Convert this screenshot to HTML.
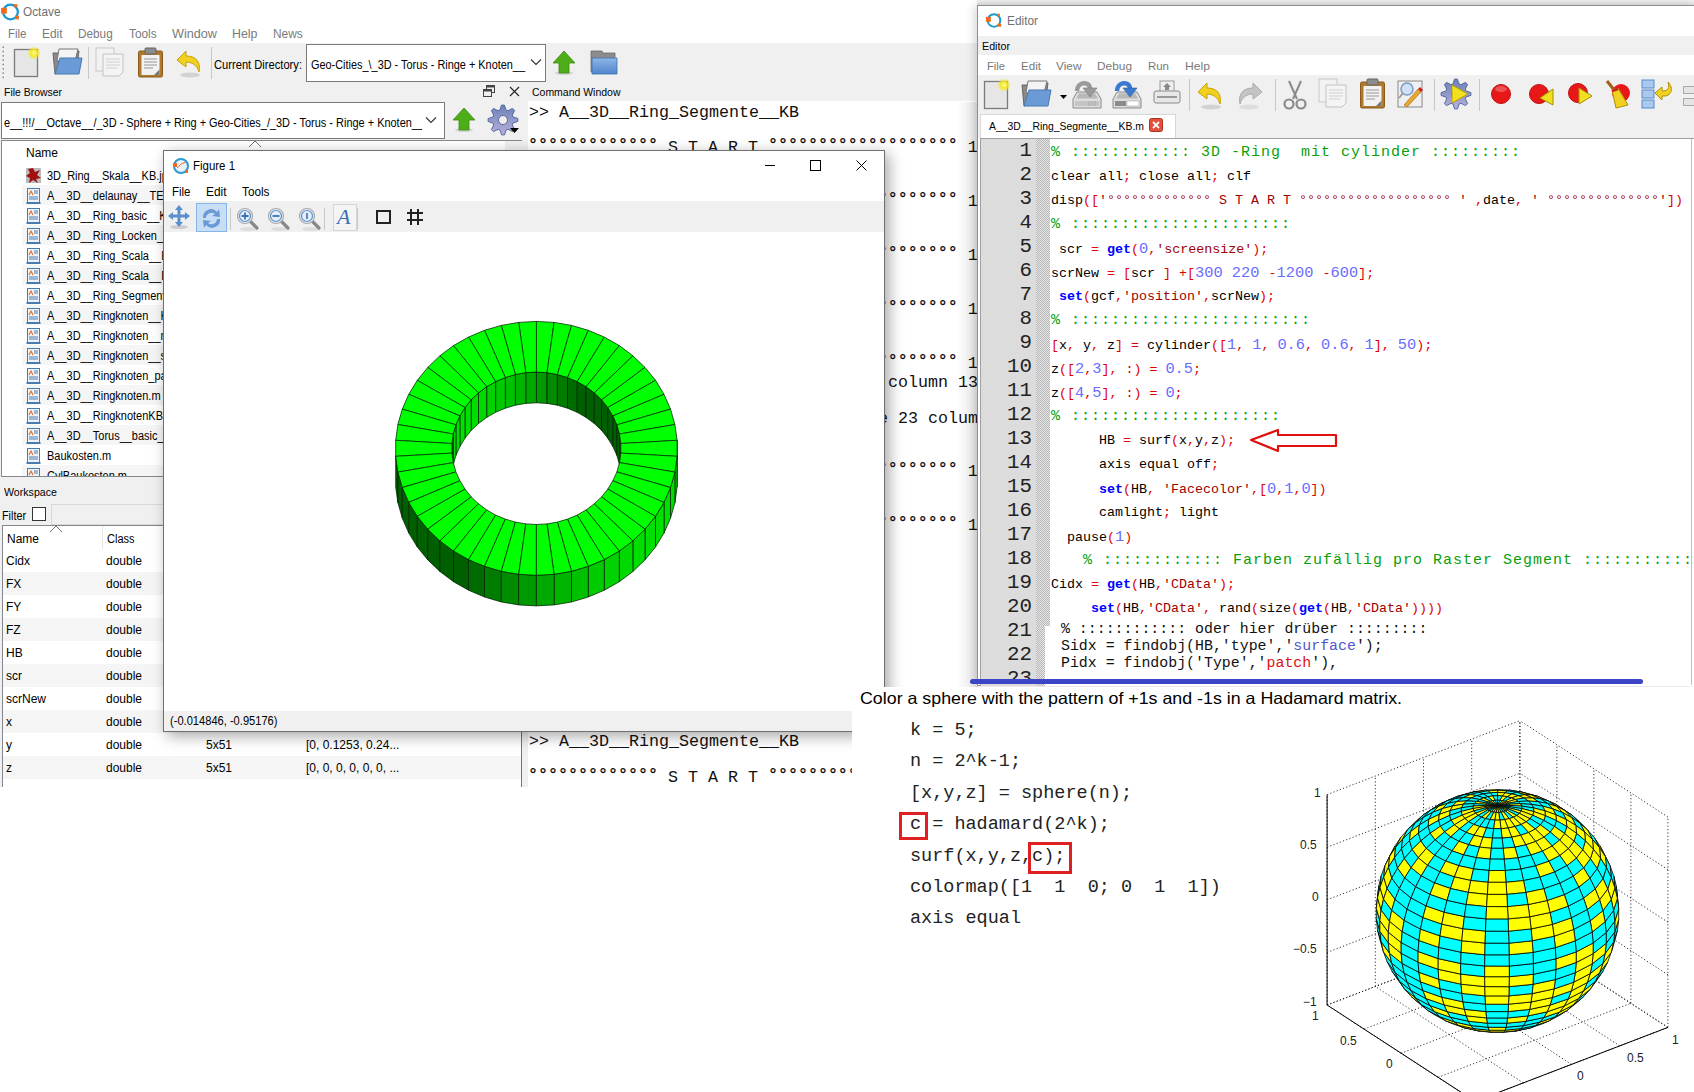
<!DOCTYPE html><html><head><meta charset="utf-8"><style>
*{margin:0;padding:0;box-sizing:border-box}
html,body{width:1694px;height:1092px;overflow:hidden;background:#fff;position:relative;font-family:"Liberation Sans",sans-serif;font-size:12px;color:#000}
.a{position:absolute}
.t{position:absolute;white-space:pre;line-height:1}
.m{font-family:"Liberation Mono",monospace}
.c{position:absolute;white-space:pre;line-height:1;font-family:"Liberation Mono",monospace;font-size:13.33px}
.cm{color:#0aa00a;font-size:16.67px}
.k{color:#0000ff;font-weight:bold}
.s{color:#a00000}
.o{color:#e00000}
.n{color:#6b6bff;font-size:15.33px}
</style></head><body><div class="a" style="left:0px;top:0px;width:978px;height:43px;background:#fff"></div><div class="a" style="left:0px;top:43px;width:978px;height:744px;background:#f0f0f0"></div><svg class="a" style="left:0px;top:1px" width="21" height="21" viewBox="0 0 20 20"><circle cx="10" cy="10.5" r="7" fill="none" stroke="#1a9ad0" stroke-width="2.2"/><rect x="1" y="6.5" width="5.5" height="5.5" fill="#f26b1d"/><rect x="13.5" y="3" width="3" height="3" fill="#f26b1d"/><rect x="14.5" y="14" width="3.5" height="3.5" fill="#f26b1d"/></svg><div id="w0" class="t" style="left:23px;top:6px;font-size:12.5px;color:#707070;transform-origin:0 0;transform:scaleX(0.9467)">Octave</div><div id="w1" class="t" style="left:8px;top:28px;color:#7a7a7a;font-size:12px;transform-origin:0 0;transform:scaleX(0.9512)">File</div><div id="w2" class="t" style="left:42px;top:28px;color:#7a7a7a;font-size:12px;transform-origin:0 0;transform:scaleX(0.9909)">Edit</div><div id="w3" class="t" style="left:78px;top:28px;color:#7a7a7a;font-size:12px;transform-origin:0 0;transform:scaleX(0.9809)">Debug</div><div id="w4" class="t" style="left:129px;top:28px;color:#7a7a7a;font-size:12px;transform-origin:0 0;transform:scaleX(0.9852)">Tools</div><div id="w5" class="t" style="left:172px;top:28px;color:#7a7a7a;font-size:12px;transform-origin:0 0;transform:scaleX(1.0542)">Window</div><div id="w6" class="t" style="left:232px;top:28px;color:#7a7a7a;font-size:12px;transform-origin:0 0;transform:scaleX(1.0329)">Help</div><div id="w7" class="t" style="left:273px;top:28px;color:#7a7a7a;font-size:12px;transform-origin:0 0;transform:scaleX(0.9928)">News</div><svg class="a" style="left:1px;top:45px" width="5" height="36" viewBox="0 0 5 36"><rect x="1.5" y="1.5" width="1.5" height="1.5" fill="#888"/><rect x="1.5" y="5.8" width="1.5" height="1.5" fill="#888"/><rect x="1.5" y="10.1" width="1.5" height="1.5" fill="#888"/><rect x="1.5" y="14.4" width="1.5" height="1.5" fill="#888"/><rect x="1.5" y="18.7" width="1.5" height="1.5" fill="#888"/><rect x="1.5" y="23.0" width="1.5" height="1.5" fill="#888"/><rect x="1.5" y="27.3" width="1.5" height="1.5" fill="#888"/><rect x="1.5" y="31.6" width="1.5" height="1.5" fill="#888"/></svg><svg class="a" style="left:13px;top:47px" width="30" height="32" viewBox="0 0 30 32"><defs><radialGradient id="glow"><stop offset="0" stop-color="#ffffa0"/><stop offset=".45" stop-color="#f4e826"/><stop offset="1" stop-color="#f4e826" stop-opacity="0"/></radialGradient></defs><rect x="1.5" y="2.5" width="23" height="27" fill="#e6e6e6" stroke="#7b7b7b" stroke-width="1.3"/><circle cx="21" cy="6" r="7" fill="url(#glow)"/></svg><svg class="a" style="left:51px;top:47px" width="32" height="30" viewBox="0 0 32 30"><path d="M2 6 L10 6 L10 4 L28 4 L26 20 L4 27 Z" fill="#8a8a8a" stroke="#666" stroke-width="1"/><path d="M8 2 L27 2 L24 14 L6 14 Z" fill="#f4f4f4" stroke="#777" stroke-width="1"/><path d="M9 11 L31 11 L28 27 L4 27 Z" fill="#6a9bd6" stroke="#4a78b0" stroke-width="1"/></svg><div class="a" style="left:88px;top:47px;width:1px;height:32px;background:#c8c8c8"></div><svg class="a" style="left:95px;top:47px" width="30" height="31" viewBox="0 0 30 31"><g opacity="0.45"><rect x="1" y="1" width="18" height="23" fill="#f6f6f6" stroke="#9a9a9a"/><path d="M8 7 L28 7 L28 25 L24 29 L8 29 Z" fill="#fafafa" stroke="#8a8a8a"/><path d="M11 12 H25 M11 15 H25 M11 18 H25 M11 21 H22" stroke="#aaa"/></g></svg><svg class="a" style="left:137px;top:47px" width="27" height="31" viewBox="0 0 27 31"><rect x="1.5" y="4" width="24" height="26" rx="1.5" fill="#b07a2e" stroke="#8a5a1a"/><rect x="4.5" y="8" width="18" height="20" fill="#f2f2f2"/><rect x="8" y="1" width="11" height="6" rx="1" fill="#8c8c8c" stroke="#666"/><path d="M7 12 H20 M7 15 H20 M7 18 H20 M7 21 H16" stroke="#999"/><path d="M17 28 L22.5 22.5 L22.5 28 Z" fill="#777"/></svg><svg class="a" style="left:175px;top:48px" width="28" height="30" viewBox="0 0 28 30"><ellipse cx="15" cy="27" rx="10" ry="2.5" fill="#000" opacity=".12"/><path d="M2 12 L11 3 L11 8 C21 8 26 14 24 24 C22 17 17 14 11 14 L11 19 Z" fill="#f0d020" stroke="#c8a000" stroke-width="1"/></svg><div class="a" style="left:211px;top:47px;width:1px;height:32px;background:#c8c8c8"></div><div id="w8" class="t" style="left:214px;top:59px;font-size:12px;transform-origin:0 0;transform:scaleX(0.9294)">Current Directory:</div><div class="a" style="left:306px;top:44px;width:240px;height:38px;background:#fff;border:1px solid #7a7a7a"></div><div id="w9" class="t" style="left:311px;top:59px;font-size:12px;transform-origin:0 0;transform:scaleX(0.9084)">Geo-Cities_\_3D - Torus - Ringe + Knoten__</div><svg class="a" style="left:530px;top:58px" width="12" height="8" viewBox="0 0 12 8"><path d="M1 1.5 L6 6.5 L11 1.5" fill="none" stroke="#333" stroke-width="1.1"/></svg><svg class="a" style="left:552px;top:50px" width="24" height="26" viewBox="0 0 24 26"><ellipse cx="12" cy="23" rx="9" ry="2" fill="#000" opacity=".12"/><path d="M12 1 L23 13 L17 13 L17 23 L7 23 L7 13 L1 13 Z" fill="#4eae1a" stroke="#3a8a10" stroke-width=".8"/></svg><svg class="a" style="left:590px;top:50px" width="29" height="27" viewBox="0 0 29 27"><defs><linearGradient id="bfg" x1="0" y1="0" x2="0" y2="1"><stop offset="0" stop-color="#8fb6e6"/><stop offset="1" stop-color="#4f86cc"/></linearGradient></defs><path d="M1 1 L12 1 L13 3 L25 3 L25 22 L1 22 Z" fill="#8c8c8c" stroke="#6a6a6a" stroke-width=".8"/><path d="M2 8 L27 8 L27 24 L2 24 Z" fill="url(#bfg)" stroke="#3e70b0" stroke-width=".8"/></svg><div id="w10" class="t" style="left:4px;top:87px;font-size:11px;transform-origin:0 0;transform:scaleX(0.9489)">File Browser</div><svg class="a" style="left:483px;top:85px" width="13" height="13" viewBox="0 0 13 13"><rect x="3.5" y=".5" width="8" height="7" fill="none" stroke="#444"/><rect x="3.5" y=".5" width="8" height="2" fill="#444"/><rect x=".5" y="4.5" width="8" height="7" fill="#f0f0f0" stroke="#444"/><rect x=".5" y="4.5" width="8" height="2" fill="#444"/></svg><svg class="a" style="left:509px;top:86px" width="11" height="11" viewBox="0 0 11 11"><path d="M1 1 L10 10 M10 1 L1 10" stroke="#222" stroke-width="1.1"/></svg><div id="w11" class="t" style="left:532px;top:87px;font-size:11px;transform-origin:0 0;transform:scaleX(0.9524)">Command Window</div><div class="a" style="left:1px;top:102px;width:444px;height:37px;background:#fff;border:1px solid #7a7a7a"></div><div class="a" style="left:2px;top:103px;width:420px;height:35px;overflow:hidden"><div id="w12" class="t" style="left:2px;top:14px;font-size:12px;transform-origin:0 0;transform:scaleX(0.9123)">e__!!!/__Octave__/_3D - Sphere + Ring + Geo-Cities_/_3D - Torus - Ringe + Knoten__</div></div><svg class="a" style="left:425px;top:116px" width="12" height="8" viewBox="0 0 12 8"><path d="M1 1.5 L6 6.5 L11 1.5" fill="none" stroke="#333" stroke-width="1.1"/></svg><svg class="a" style="left:452px;top:107px" width="24" height="26" viewBox="0 0 24 26"><ellipse cx="12" cy="23" rx="9" ry="2" fill="#000" opacity=".12"/><path d="M12 1 L23 13 L17 13 L17 23 L7 23 L7 13 L1 13 Z" fill="#4eae1a" stroke="#3a8a10" stroke-width=".8"/></svg><svg class="a" style="left:487px;top:104px" width="32" height="32" viewBox="0 0 32 32"><defs><linearGradient id="gg487" x1="0" y1="0" x2="0" y2="1"><stop offset="0" stop-color="#6a80b8"/><stop offset="1" stop-color="#b8b0dc"/></linearGradient></defs><path d="M14.5 1.1 L17.4 1.1 L19.0 5.9 L20.9 6.7 L25.5 4.4 L27.6 6.5 L25.3 11.0 L26.0 12.9 L30.9 14.5 L30.9 17.4 L26.1 19.0 L25.3 20.9 L27.6 25.5 L25.5 27.6 L21.0 25.3 L19.1 26.0 L17.5 30.9 L14.6 30.9 L13.0 26.1 L11.1 25.3 L6.5 27.6 L4.4 25.5 L6.7 21.0 L6.0 19.1 L1.1 17.5 L1.1 14.6 L5.9 13.0 L6.7 11.1 L4.4 6.5 L6.5 4.4 L11.0 6.7 L12.9 6.0Z" fill="url(#gg487)" stroke="#5a6aa0" stroke-width="1"/><circle cx="16" cy="16" r="4.5" fill="#f0f0f0" stroke="#5a6aa0"/></svg><svg class="a" style="left:510px;top:128px" width="10" height="6" viewBox="0 0 10 6"><path d="M0 0 L9 0 L4.5 5 Z" fill="#000"/></svg><div class="a" style="left:1px;top:140px;width:522px;height:337px;background:#fff;border:1px solid #828790"></div><div class="a" style="left:505px;top:141px;width:17px;height:335px;background:#f0f0f0"></div><svg class="a" style="left:248px;top:140px" width="14" height="8" viewBox="0 0 14 8"><path d="M1 7 L7 1 L13 7" fill="none" stroke="#777" stroke-width="1"/></svg><div id="w13" class="t" style="left:26px;top:147px;font-size:12px;transform-origin:0 0;transform:scaleX(0.9995)">Name</div><div class="a" style="left:2px;top:141px;width:503px;height:335px;overflow:hidden"><svg class="a" style="left:23px;top:26px" width="17" height="17" viewBox="0 0 17 17"><rect x="1" y="1" width="15" height="15" fill="#bbb"/><path d="M8 1 L10 5 L15 3 L12 8 L16 11 L11 12 L13 16 L8 13 L4 16 L5 11 L1 9 L5 6 L3 2 Z" fill="#a01010"/></svg><div class="t" style="left:45px;top:29px;font-size:12px;transform:scaleX(.915);transform-origin:0 0">3D_Ring__Skala__KB.jpg</div><div class="a" style="left:20px;top:44px;width:483px;height:20px;background:#f5f5f5"></div><svg class="a" style="left:24px;top:46px" width="16" height="18" viewBox="0 0 16 18"><rect x="1.5" y="1.5" width="12" height="14" fill="#eef3fa" stroke="#4a7ab0"/><path d="M3 8 L5 4 L7 8" stroke="#e8702a" fill="none" stroke-width="1.2"/><path d="M8 4 H12 M8 6 H12 M3 10 H12 M3 12 H12" stroke="#4a7ab0"/><rect x="0.5" y="15" width="14" height="2" fill="#4a7ab0"/></svg><div class="t" style="left:45px;top:49px;font-size:12px;transform:scaleX(.915);transform-origin:0 0">A__3D__delaunay__TEST.m</div><svg class="a" style="left:24px;top:66px" width="16" height="18" viewBox="0 0 16 18"><rect x="1.5" y="1.5" width="12" height="14" fill="#eef3fa" stroke="#4a7ab0"/><path d="M3 8 L5 4 L7 8" stroke="#e8702a" fill="none" stroke-width="1.2"/><path d="M8 4 H12 M8 6 H12 M3 10 H12 M3 12 H12" stroke="#4a7ab0"/><rect x="0.5" y="15" width="14" height="2" fill="#4a7ab0"/></svg><div class="t" style="left:45px;top:69px;font-size:12px;transform:scaleX(.915);transform-origin:0 0">A__3D__Ring_basic__KB.m</div><div class="a" style="left:20px;top:84px;width:483px;height:20px;background:#f5f5f5"></div><svg class="a" style="left:24px;top:86px" width="16" height="18" viewBox="0 0 16 18"><rect x="1.5" y="1.5" width="12" height="14" fill="#eef3fa" stroke="#4a7ab0"/><path d="M3 8 L5 4 L7 8" stroke="#e8702a" fill="none" stroke-width="1.2"/><path d="M8 4 H12 M8 6 H12 M3 10 H12 M3 12 H12" stroke="#4a7ab0"/><rect x="0.5" y="15" width="14" height="2" fill="#4a7ab0"/></svg><div class="t" style="left:45px;top:89px;font-size:12px;transform:scaleX(.915);transform-origin:0 0">A__3D__Ring_Locken_V.m</div><svg class="a" style="left:24px;top:106px" width="16" height="18" viewBox="0 0 16 18"><rect x="1.5" y="1.5" width="12" height="14" fill="#eef3fa" stroke="#4a7ab0"/><path d="M3 8 L5 4 L7 8" stroke="#e8702a" fill="none" stroke-width="1.2"/><path d="M8 4 H12 M8 6 H12 M3 10 H12 M3 12 H12" stroke="#4a7ab0"/><rect x="0.5" y="15" width="14" height="2" fill="#4a7ab0"/></svg><div class="t" style="left:45px;top:109px;font-size:12px;transform:scaleX(.915);transform-origin:0 0">A__3D__Ring_Scala__BB.m</div><div class="a" style="left:20px;top:124px;width:483px;height:20px;background:#f5f5f5"></div><svg class="a" style="left:24px;top:126px" width="16" height="18" viewBox="0 0 16 18"><rect x="1.5" y="1.5" width="12" height="14" fill="#eef3fa" stroke="#4a7ab0"/><path d="M3 8 L5 4 L7 8" stroke="#e8702a" fill="none" stroke-width="1.2"/><path d="M8 4 H12 M8 6 H12 M3 10 H12 M3 12 H12" stroke="#4a7ab0"/><rect x="0.5" y="15" width="14" height="2" fill="#4a7ab0"/></svg><div class="t" style="left:45px;top:129px;font-size:12px;transform:scaleX(.915);transform-origin:0 0">A__3D__Ring_Scala__BB2.m</div><svg class="a" style="left:24px;top:146px" width="16" height="18" viewBox="0 0 16 18"><rect x="1.5" y="1.5" width="12" height="14" fill="#eef3fa" stroke="#4a7ab0"/><path d="M3 8 L5 4 L7 8" stroke="#e8702a" fill="none" stroke-width="1.2"/><path d="M8 4 H12 M8 6 H12 M3 10 H12 M3 12 H12" stroke="#4a7ab0"/><rect x="0.5" y="15" width="14" height="2" fill="#4a7ab0"/></svg><div class="t" style="left:45px;top:149px;font-size:12px;transform:scaleX(.915);transform-origin:0 0">A__3D__Ring_Segmente__KB.m</div><div class="a" style="left:20px;top:164px;width:483px;height:20px;background:#f5f5f5"></div><svg class="a" style="left:24px;top:166px" width="16" height="18" viewBox="0 0 16 18"><rect x="1.5" y="1.5" width="12" height="14" fill="#eef3fa" stroke="#4a7ab0"/><path d="M3 8 L5 4 L7 8" stroke="#e8702a" fill="none" stroke-width="1.2"/><path d="M8 4 H12 M8 6 H12 M3 10 H12 M3 12 H12" stroke="#4a7ab0"/><rect x="0.5" y="15" width="14" height="2" fill="#4a7ab0"/></svg><div class="t" style="left:45px;top:169px;font-size:12px;transform:scaleX(.915);transform-origin:0 0">A__3D__Ringknoten__KB.m</div><svg class="a" style="left:24px;top:186px" width="16" height="18" viewBox="0 0 16 18"><rect x="1.5" y="1.5" width="12" height="14" fill="#eef3fa" stroke="#4a7ab0"/><path d="M3 8 L5 4 L7 8" stroke="#e8702a" fill="none" stroke-width="1.2"/><path d="M8 4 H12 M8 6 H12 M3 10 H12 M3 12 H12" stroke="#4a7ab0"/><rect x="0.5" y="15" width="14" height="2" fill="#4a7ab0"/></svg><div class="t" style="left:45px;top:189px;font-size:12px;transform:scaleX(.915);transform-origin:0 0">A__3D__Ringknoten__m.m</div><div class="a" style="left:20px;top:204px;width:483px;height:20px;background:#f5f5f5"></div><svg class="a" style="left:24px;top:206px" width="16" height="18" viewBox="0 0 16 18"><rect x="1.5" y="1.5" width="12" height="14" fill="#eef3fa" stroke="#4a7ab0"/><path d="M3 8 L5 4 L7 8" stroke="#e8702a" fill="none" stroke-width="1.2"/><path d="M8 4 H12 M8 6 H12 M3 10 H12 M3 12 H12" stroke="#4a7ab0"/><rect x="0.5" y="15" width="14" height="2" fill="#4a7ab0"/></svg><div class="t" style="left:45px;top:209px;font-size:12px;transform:scaleX(.915);transform-origin:0 0">A__3D__Ringknoten__s.m</div><svg class="a" style="left:24px;top:226px" width="16" height="18" viewBox="0 0 16 18"><rect x="1.5" y="1.5" width="12" height="14" fill="#eef3fa" stroke="#4a7ab0"/><path d="M3 8 L5 4 L7 8" stroke="#e8702a" fill="none" stroke-width="1.2"/><path d="M8 4 H12 M8 6 H12 M3 10 H12 M3 12 H12" stroke="#4a7ab0"/><rect x="0.5" y="15" width="14" height="2" fill="#4a7ab0"/></svg><div class="t" style="left:45px;top:229px;font-size:12px;transform:scaleX(.915);transform-origin:0 0">A__3D__Ringknoten_pa.m</div><div class="a" style="left:20px;top:244px;width:483px;height:20px;background:#f5f5f5"></div><svg class="a" style="left:24px;top:246px" width="16" height="18" viewBox="0 0 16 18"><rect x="1.5" y="1.5" width="12" height="14" fill="#eef3fa" stroke="#4a7ab0"/><path d="M3 8 L5 4 L7 8" stroke="#e8702a" fill="none" stroke-width="1.2"/><path d="M8 4 H12 M8 6 H12 M3 10 H12 M3 12 H12" stroke="#4a7ab0"/><rect x="0.5" y="15" width="14" height="2" fill="#4a7ab0"/></svg><div class="t" style="left:45px;top:249px;font-size:12px;transform:scaleX(.915);transform-origin:0 0">A__3D__Ringknoten.m</div><svg class="a" style="left:24px;top:266px" width="16" height="18" viewBox="0 0 16 18"><rect x="1.5" y="1.5" width="12" height="14" fill="#eef3fa" stroke="#4a7ab0"/><path d="M3 8 L5 4 L7 8" stroke="#e8702a" fill="none" stroke-width="1.2"/><path d="M8 4 H12 M8 6 H12 M3 10 H12 M3 12 H12" stroke="#4a7ab0"/><rect x="0.5" y="15" width="14" height="2" fill="#4a7ab0"/></svg><div class="t" style="left:45px;top:269px;font-size:12px;transform:scaleX(.915);transform-origin:0 0">A__3D__RingknotenKB.m</div><div class="a" style="left:20px;top:284px;width:483px;height:20px;background:#f5f5f5"></div><svg class="a" style="left:24px;top:286px" width="16" height="18" viewBox="0 0 16 18"><rect x="1.5" y="1.5" width="12" height="14" fill="#eef3fa" stroke="#4a7ab0"/><path d="M3 8 L5 4 L7 8" stroke="#e8702a" fill="none" stroke-width="1.2"/><path d="M8 4 H12 M8 6 H12 M3 10 H12 M3 12 H12" stroke="#4a7ab0"/><rect x="0.5" y="15" width="14" height="2" fill="#4a7ab0"/></svg><div class="t" style="left:45px;top:289px;font-size:12px;transform:scaleX(.915);transform-origin:0 0">A__3D__Torus__basic_.m</div><svg class="a" style="left:24px;top:306px" width="16" height="18" viewBox="0 0 16 18"><rect x="1.5" y="1.5" width="12" height="14" fill="#eef3fa" stroke="#4a7ab0"/><path d="M3 8 L5 4 L7 8" stroke="#e8702a" fill="none" stroke-width="1.2"/><path d="M8 4 H12 M8 6 H12 M3 10 H12 M3 12 H12" stroke="#4a7ab0"/><rect x="0.5" y="15" width="14" height="2" fill="#4a7ab0"/></svg><div class="t" style="left:45px;top:309px;font-size:12px;transform:scaleX(.915);transform-origin:0 0">Baukosten.m</div><div class="a" style="left:20px;top:324px;width:483px;height:20px;background:#f5f5f5"></div><svg class="a" style="left:24px;top:326px" width="16" height="18" viewBox="0 0 16 18"><rect x="1.5" y="1.5" width="12" height="14" fill="#eef3fa" stroke="#4a7ab0"/><path d="M3 8 L5 4 L7 8" stroke="#e8702a" fill="none" stroke-width="1.2"/><path d="M8 4 H12 M8 6 H12 M3 10 H12 M3 12 H12" stroke="#4a7ab0"/><rect x="0.5" y="15" width="14" height="2" fill="#4a7ab0"/></svg><div class="t" style="left:45px;top:329px;font-size:12px;transform:scaleX(.915);transform-origin:0 0">CylBaukosten.m</div></div><div class="a" style="left:0px;top:477px;width:522px;height:310px;background:#f0f0f0"></div><div id="w14" class="t" style="left:4px;top:487px;font-size:11px;transform-origin:0 0;transform:scaleX(0.9667)">Workspace</div><div id="w15" class="t" style="left:2px;top:510px;font-size:12px;transform-origin:0 0;transform:scaleX(0.8998)">Filter</div><div class="a" style="left:32px;top:507px;width:14px;height:14px;background:#fff;border:1px solid #333"></div><div class="a" style="left:51px;top:504px;width:471px;height:21px;background:#f0f0f0;border:1px solid #d9d9d9;border-right:none"></div><div class="a" style="left:2px;top:525px;width:520px;height:262px;background:#fff;border-left:1px solid #828790;border-top:1px solid #828790"></div><svg class="a" style="left:49px;top:525px" width="14" height="8" viewBox="0 0 14 8"><path d="M1 7 L7 1 L13 7" fill="none" stroke="#777" stroke-width="1"/></svg><div class="a" style="left:102px;top:526px;width:1px;height:23px;background:#e5e5e5"></div><div id="w16" class="t" style="left:7px;top:533px;font-size:12px;transform-origin:0 0;transform:scaleX(0.9995)">Name</div><div id="w17" class="t" style="left:107px;top:533px;font-size:12px;transform-origin:0 0;transform:scaleX(0.9162)">Class</div><div class="t" style="left:6px;top:555px;font-size:12px">Cidx</div><div class="t" style="left:106px;top:555px;font-size:12px">double</div><div class="a" style="left:3px;top:572px;width:518px;height:23px;background:#f5f5f5"></div><div class="t" style="left:6px;top:578px;font-size:12px">FX</div><div class="t" style="left:106px;top:578px;font-size:12px">double</div><div class="t" style="left:6px;top:601px;font-size:12px">FY</div><div class="t" style="left:106px;top:601px;font-size:12px">double</div><div class="a" style="left:3px;top:618px;width:518px;height:23px;background:#f5f5f5"></div><div class="t" style="left:6px;top:624px;font-size:12px">FZ</div><div class="t" style="left:106px;top:624px;font-size:12px">double</div><div class="t" style="left:6px;top:647px;font-size:12px">HB</div><div class="t" style="left:106px;top:647px;font-size:12px">double</div><div class="a" style="left:3px;top:664px;width:518px;height:23px;background:#f5f5f5"></div><div class="t" style="left:6px;top:670px;font-size:12px">scr</div><div class="t" style="left:106px;top:670px;font-size:12px">double</div><div class="t" style="left:6px;top:693px;font-size:12px">scrNew</div><div class="t" style="left:106px;top:693px;font-size:12px">double</div><div class="a" style="left:3px;top:710px;width:518px;height:23px;background:#f5f5f5"></div><div class="t" style="left:6px;top:716px;font-size:12px">x</div><div class="t" style="left:106px;top:716px;font-size:12px">double</div><div class="t" style="left:6px;top:739px;font-size:12px">y</div><div class="t" style="left:106px;top:739px;font-size:12px">double</div><div class="t" style="left:206px;top:739px;font-size:12px">5x51</div><div class="t" style="left:306px;top:739px;font-size:12px">[0, 0.1253, 0.24...</div><div class="a" style="left:3px;top:756px;width:518px;height:23px;background:#f5f5f5"></div><div class="t" style="left:6px;top:762px;font-size:12px">z</div><div class="t" style="left:106px;top:762px;font-size:12px">double</div><div class="t" style="left:206px;top:762px;font-size:12px">5x51</div><div class="t" style="left:306px;top:762px;font-size:12px">[0, 0, 0, 0, 0, 0, ...</div><div class="a" style="left:522px;top:102px;width:6px;height:685px;background:#f0f0f0"></div><div class="a" style="left:528px;top:101px;width:450px;height:686px;background:#fff"></div><div class="a" style="left:521px;top:525px;width:1px;height:262px;background:#6f7680"></div><div class="c" style="left:529px;top:105px;font-size:16.67px;color:#111">&gt;&gt; A__3D__Ring_Segmente__KB</div><div class="c" style="left:528px;top:140px;font-size:16.67px;color:#111"><span style="position:relative;top:-2px;font-weight:bold">°°°°°°°°°°°°°</span> S T A R T <span style="position:relative;top:-2px;font-weight:bold">°°°°°°°°°°°°°°°°°°°</span> 1</div><div class="c" style="left:528px;top:194px;font-size:16.67px;color:#111"><span style="position:relative;top:-2px;font-weight:bold">°°°°°°°°°°°°°</span> S T A R T <span style="position:relative;top:-2px;font-weight:bold">°°°°°°°°°°°°°°°°°°°</span> 1</div><div class="c" style="left:528px;top:248px;font-size:16.67px;color:#111"><span style="position:relative;top:-2px;font-weight:bold">°°°°°°°°°°°°°</span> S T A R T <span style="position:relative;top:-2px;font-weight:bold">°°°°°°°°°°°°°°°°°°°</span> 1</div><div class="c" style="left:528px;top:302px;font-size:16.67px;color:#111"><span style="position:relative;top:-2px;font-weight:bold">°°°°°°°°°°°°°</span> S T A R T <span style="position:relative;top:-2px;font-weight:bold">°°°°°°°°°°°°°°°°°°°</span> 1</div><div class="c" style="left:528px;top:356px;font-size:16.67px;color:#111"><span style="position:relative;top:-2px;font-weight:bold">°°°°°°°°°°°°°</span> S T A R T <span style="position:relative;top:-2px;font-weight:bold">°°°°°°°°°°°°°°°°°°°</span> 1</div><div class="c" style="left:528px;top:464px;font-size:16.67px;color:#111"><span style="position:relative;top:-2px;font-weight:bold">°°°°°°°°°°°°°</span> S T A R T <span style="position:relative;top:-2px;font-weight:bold">°°°°°°°°°°°°°°°°°°°</span> 1</div><div class="c" style="left:528px;top:518px;font-size:16.67px;color:#111"><span style="position:relative;top:-2px;font-weight:bold">°°°°°°°°°°°°°</span> S T A R T <span style="position:relative;top:-2px;font-weight:bold">°°°°°°°°°°°°°°°°°°°</span> 1</div><div class="c" style="left:888px;top:375px;font-size:16.67px;color:#111">column 13</div><div class="c" style="left:878px;top:411px;font-size:16.67px;color:#111">e 23 colum</div><div class="c" style="left:529px;top:734px;font-size:16.67px;color:#111">&gt;&gt; A__3D__Ring_Segmente__KB</div><div class="c" style="left:528px;top:770px;font-size:16.67px;color:#111"><span style="position:relative;top:-2px;font-weight:bold">°°°°°°°°°°°°°</span> S T A R T <span style="position:relative;top:-2px;font-weight:bold">°°°°°°°°°°°°°°°°°°°</span></div><div class="a" style="left:957px;top:102px;width:21px;height:585px;background:linear-gradient(to right,rgba(0,0,0,0),rgba(0,0,0,.10))"></div><div class="a" style="left:163px;top:150px;width:722px;height:582px;background:#fff;border:1px solid #6f6f6f;box-shadow:4px 4px 14px rgba(0,0,0,.35)"></div><svg class="a" style="left:172px;top:157px" width="18" height="18" viewBox="0 0 18 18"><circle cx="9" cy="9" r="7" fill="#e8f0f8" stroke="#2a9ad0" stroke-width="2"/><path d="M5 11 Q9 6 14 5" stroke="#e87030" fill="none"/><rect x="1" y="6" width="4" height="4" fill="#f26b1d"/><rect x="13" y="13" width="3" height="3" fill="#f26b1d"/></svg><div id="w18" class="t" style="left:193px;top:160px;font-size:12.5px;transform-origin:0 0;transform:scaleX(0.9158)">Figure 1</div><svg class="a" style="left:765px;top:165px" width="12" height="2" viewBox="0 0 12 2"><rect width="10" height="1" fill="#000"/></svg><svg class="a" style="left:810px;top:160px" width="12" height="12" viewBox="0 0 12 12"><rect x=".5" y=".5" width="10" height="10" fill="none" stroke="#000"/></svg><svg class="a" style="left:856px;top:160px" width="11" height="11" viewBox="0 0 11 11"><path d="M.5 .5 L10.5 10.5 M10.5 .5 L.5 10.5" stroke="#000"/></svg><div id="w19" class="t" style="left:172px;top:186px;font-size:12px;transform-origin:0 0;transform:scaleX(0.9564)">File</div><div id="w20" class="t" style="left:206px;top:186px;font-size:12px;transform-origin:0 0;transform:scaleX(0.9909)">Edit</div><div id="w21" class="t" style="left:242px;top:186px;font-size:12px;transform-origin:0 0;transform:scaleX(0.9816)">Tools</div><div class="a" style="left:164px;top:201px;width:720px;height:31px;background:#f0f0f0"></div><svg class="a" style="left:167px;top:204px" width="24" height="26" viewBox="0 0 24 26"><ellipse cx="12" cy="23" rx="9" ry="2" fill="#000" opacity=".15"/><path d="M12 1 L16 6 L13.5 6 L13.5 10.5 L18 10.5 L18 8 L23 12 L18 16 L18 13.5 L13.5 13.5 L13.5 18 L16 18 L12 23 L8 18 L10.5 18 L10.5 13.5 L6 13.5 L6 16 L1 12 L6 8 L6 10.5 L10.5 10.5 L10.5 6 L8 6 Z" fill="#5b8fcc"/></svg><div class="a" style="left:196px;top:203px;width:31px;height:29px;background:#c8def5;border:1px solid #86b6e8"></div><svg class="a" style="left:199px;top:206px" width="25" height="24" viewBox="0 0 25 24"><path d="M4 12 A8 8 0 0 1 18 6 L20 3 L21 11 L13 10 L16 8 A5.5 5.5 0 0 0 7 12 Z" fill="#6a9ad6"/><path d="M21 13 A8 8 0 0 1 7 19 L5 22 L4 14 L12 15 L9 17 A5.5 5.5 0 0 0 18 13 Z" fill="#6a9ad6"/></svg><div class="a" style="left:230px;top:208px;width:1px;height:22px;background:#c8c8c8"></div><svg class="a" style="left:236px;top:207px" width="24" height="24" viewBox="0 0 24 24"><ellipse cx="13" cy="22" rx="9" ry="2" fill="#000" opacity=".08"/><path d="M14 14 L21 21" stroke="#888" stroke-width="3.2" stroke-linecap="round"/><circle cx="9" cy="9" r="7.5" fill="#e6eef8" stroke="#aaa" stroke-width="1.2"/><circle cx="9" cy="9" r="5.5" fill="none" stroke="#5b8fcc" stroke-width="1.2"/><path d="M9 5.5 V12.5 M5.5 9 H12.5" stroke="#3a70b8" stroke-width="1.8"/></svg><svg class="a" style="left:267px;top:207px" width="24" height="24" viewBox="0 0 24 24"><ellipse cx="13" cy="22" rx="9" ry="2" fill="#000" opacity=".08"/><path d="M14 14 L21 21" stroke="#888" stroke-width="3.2" stroke-linecap="round"/><circle cx="9" cy="9" r="7.5" fill="#e6eef8" stroke="#aaa" stroke-width="1.2"/><circle cx="9" cy="9" r="5.5" fill="none" stroke="#5b8fcc" stroke-width="1.2"/><path d="M5.5 9 H12.5" stroke="#3a70b8" stroke-width="1.8"/></svg><svg class="a" style="left:298px;top:207px" width="24" height="24" viewBox="0 0 24 24"><ellipse cx="13" cy="22" rx="9" ry="2" fill="#000" opacity=".08"/><path d="M14 14 L21 21" stroke="#888" stroke-width="3.2" stroke-linecap="round"/><circle cx="9" cy="9" r="7.5" fill="#e6eef8" stroke="#aaa" stroke-width="1.2"/><circle cx="9" cy="9" r="5.5" fill="none" stroke="#5b8fcc" stroke-width="1.2"/><path d="M9 6 V12" stroke="#3a70b8" stroke-width="1.6"/></svg><div class="a" style="left:324px;top:208px;width:1px;height:22px;background:#c8c8c8"></div><div class="a" style="left:333px;top:204px;width:24px;height:27px;background:#f4f4f4;border:1px solid #d6d6d6"></div><div class="t" style="left:337px;top:206px;font-family:'Liberation Serif',serif;font-style:italic;font-size:22px;color:#3d6eb4">A</div><div class="a" style="left:338px;top:208px;width:1px;height:22px;background:transparent"></div><div class="a" style="left:357px;top:208px;width:1px;height:22px;background:#c8c8c8"></div><div class="a" style="left:376px;top:210px;width:15px;height:14px;border:2px solid #222"></div><svg class="a" style="left:405px;top:207px" width="20" height="20" viewBox="0 0 20 20"><path d="M6 2 V18 M13 2 V18 M2 6 H18 M2 13 H18" stroke="#222" stroke-width="2"/></svg><div class="a" style="left:164px;top:711px;width:720px;height:20px;background:#f0f0f0"></div><div id="w22" class="t" style="left:170px;top:715px;font-size:12px;transform-origin:0 0;transform:scaleX(0.9260)">(-0.014846, -0.95176)</div><svg class="a" style="left:0;top:0" width="1694" height="1092"><g stroke="#002400" stroke-width=".75" stroke-linejoin="round"><polygon points="547.0,372.7 536.4,372.1 536.4,402.8 547.0,403.4" fill="rgb(0,154,0)"/><polygon points="536.4,372.1 525.8,372.7 525.8,403.4 536.4,402.8" fill="rgb(0,168,0)"/><polygon points="557.4,374.5 547.0,372.7 547.0,403.4 557.4,405.2" fill="rgb(0,139,0)"/><polygon points="525.8,372.7 515.4,374.5 515.4,405.2 525.8,403.4" fill="rgb(0,181,0)"/><polygon points="567.5,377.5 557.4,374.5 557.4,405.2 567.5,408.2" fill="rgb(0,124,0)"/><polygon points="515.4,374.5 505.3,377.5 505.3,408.2 515.4,405.2" fill="rgb(0,193,0)"/><polygon points="577.2,381.6 567.5,377.5 567.5,408.2 577.2,412.3" fill="rgb(0,108,0)"/><polygon points="505.3,377.5 495.6,381.6 495.6,412.3 505.3,408.2" fill="rgb(0,203,0)"/><polygon points="586.1,386.7 577.2,381.6 577.2,412.3 586.1,417.4" fill="rgb(0,95,0)"/><polygon points="495.6,381.6 486.7,386.7 486.7,417.4 495.6,412.3" fill="rgb(0,211,0)"/><polygon points="594.3,392.8 586.1,386.7 586.1,417.4 594.3,423.5" fill="rgb(0,95,0)"/><polygon points="486.7,386.7 478.5,392.8 478.5,423.5 486.7,417.4" fill="rgb(0,217,0)"/><polygon points="478.5,392.8 471.2,399.8 471.2,430.4 478.5,423.5" fill="rgb(0,222,0)"/><polygon points="601.6,399.8 594.3,392.8 594.3,423.5 601.6,430.4" fill="rgb(0,95,0)"/><polygon points="471.2,399.8 465.0,407.5 465.0,438.2 471.2,430.4" fill="rgb(0,224,0)"/><polygon points="607.8,407.5 601.6,399.8 601.6,430.4 607.8,438.2" fill="rgb(0,95,0)"/><polygon points="612.9,415.9 607.8,407.5 607.8,438.2 612.9,446.6" fill="rgb(0,95,0)"/><polygon points="465.0,407.5 459.9,415.9 459.9,446.6 465.0,438.2" fill="rgb(0,225,0)"/><polygon points="554.1,322.4 536.4,321.4 536.4,372.1 547.0,372.7" fill="rgb(0,255,0)"/><polygon points="536.4,321.4 518.7,322.4 525.8,372.7 536.4,372.1" fill="rgb(0,255,0)"/><polygon points="571.5,325.4 554.1,322.4 547.0,372.7 557.4,374.5" fill="rgb(0,255,0)"/><polygon points="518.7,322.4 501.3,325.4 515.4,374.5 525.8,372.7" fill="rgb(0,255,0)"/><polygon points="588.3,330.3 571.5,325.4 557.4,374.5 567.5,377.5" fill="rgb(0,255,0)"/><polygon points="501.3,325.4 484.5,330.3 505.3,377.5 515.4,374.5" fill="rgb(0,255,0)"/><polygon points="616.9,424.8 612.9,415.9 612.9,446.6 616.9,455.5" fill="rgb(0,95,0)"/><polygon points="459.9,415.9 455.9,424.8 455.9,455.5 459.9,446.6" fill="rgb(0,223,0)"/><polygon points="604.3,337.1 588.3,330.3 567.5,377.5 577.2,381.6" fill="rgb(0,255,0)"/><polygon points="484.5,330.3 468.5,337.1 495.6,381.6 505.3,377.5" fill="rgb(0,255,0)"/><polygon points="619.3,345.6 604.3,337.1 577.2,381.6 586.1,386.7" fill="rgb(0,255,0)"/><polygon points="468.5,337.1 453.5,345.6 486.7,386.7 495.6,381.6" fill="rgb(0,255,0)"/><polygon points="455.9,424.8 453.3,434.0 453.3,464.7 455.9,455.5" fill="rgb(0,219,0)"/><polygon points="619.5,434.0 616.9,424.8 616.9,455.5 619.5,464.7" fill="rgb(0,95,0)"/><polygon points="632.9,355.8 619.3,345.6 586.1,386.7 594.3,392.8" fill="rgb(0,255,0)"/><polygon points="453.5,345.6 439.9,355.8 478.5,392.8 486.7,386.7" fill="rgb(0,255,0)"/><polygon points="453.3,434.0 452.0,443.5 452.0,474.2 453.3,464.7" fill="rgb(0,214,0)"/><polygon points="620.8,443.5 619.5,434.0 619.5,464.7 620.8,474.2" fill="rgb(0,95,0)"/><polygon points="439.9,355.8 427.8,367.4 471.2,399.8 478.5,392.8" fill="rgb(0,255,0)"/><polygon points="645.0,367.4 632.9,355.8 594.3,392.8 601.6,399.8" fill="rgb(0,255,0)"/><polygon points="452.0,443.5 452.0,453.1 452.0,483.8 452.0,474.2" fill="rgb(0,206,0)"/><polygon points="677.1,487.0 677.1,471.0 677.1,440.3 677.1,456.3" fill="rgb(0,206,0)"/><polygon points="427.8,367.4 417.3,380.3 465.0,407.5 471.2,399.8" fill="rgb(0,255,0)"/><polygon points="655.5,380.3 645.0,367.4 601.6,399.8 607.8,407.5" fill="rgb(0,255,0)"/><polygon points="395.7,487.0 397.9,502.8 397.9,472.1 395.7,456.3" fill="rgb(0,95,0)"/><polygon points="674.9,502.8 677.1,487.0 677.1,456.3 674.9,472.1" fill="rgb(0,214,0)"/><polygon points="664.0,394.3 655.5,380.3 607.8,407.5 612.9,415.9" fill="rgb(0,255,0)"/><polygon points="417.3,380.3 408.8,394.3 459.9,415.9 465.0,407.5" fill="rgb(0,255,0)"/><polygon points="670.5,409.1 664.0,394.3 612.9,415.9 616.9,424.8" fill="rgb(0,255,0)"/><polygon points="408.8,394.3 402.3,409.1 455.9,424.8 459.9,415.9" fill="rgb(0,255,0)"/><polygon points="397.9,502.8 402.3,518.2 402.3,487.5 397.9,472.1" fill="rgb(0,95,0)"/><polygon points="670.5,518.2 674.9,502.8 674.9,472.1 670.5,487.5" fill="rgb(0,219,0)"/><polygon points="402.3,409.1 397.9,424.5 453.3,434.0 455.9,424.8" fill="rgb(0,255,0)"/><polygon points="674.9,424.5 670.5,409.1 616.9,424.8 619.5,434.0" fill="rgb(0,255,0)"/><polygon points="402.3,518.2 408.8,533.1 408.8,502.4 402.3,487.5" fill="rgb(0,95,0)"/><polygon points="664.0,533.1 670.5,518.2 670.5,487.5 664.0,502.4" fill="rgb(0,223,0)"/><polygon points="397.9,424.5 395.7,440.3 452.0,443.5 453.3,434.0" fill="rgb(0,255,0)"/><polygon points="677.1,440.3 674.9,424.5 619.5,434.0 620.8,443.5" fill="rgb(0,255,0)"/><polygon points="408.8,533.1 417.3,547.0 417.3,516.3 408.8,502.4" fill="rgb(0,95,0)"/><polygon points="655.5,547.0 664.0,533.1 664.0,502.4 655.5,516.3" fill="rgb(0,225,0)"/><polygon points="395.7,440.3 395.7,456.3 452.0,453.1 452.0,443.5" fill="rgb(0,255,0)"/><polygon points="677.1,456.3 677.1,440.3 620.8,443.5 620.8,453.1" fill="rgb(0,255,0)"/><polygon points="417.3,547.0 427.8,559.9 427.8,529.2 417.3,516.3" fill="rgb(0,95,0)"/><polygon points="645.0,559.9 655.5,547.0 655.5,516.3 645.0,529.2" fill="rgb(0,224,0)"/><polygon points="395.7,456.3 397.9,472.1 453.3,462.6 452.0,453.1" fill="rgb(0,255,0)"/><polygon points="674.9,472.1 677.1,456.3 620.8,453.1 619.5,462.6" fill="rgb(0,255,0)"/><polygon points="427.8,559.9 439.9,571.5 439.9,540.9 427.8,529.2" fill="rgb(0,95,0)"/><polygon points="632.9,571.5 645.0,559.9 645.0,529.2 632.9,540.9" fill="rgb(0,222,0)"/><polygon points="397.9,472.1 402.3,487.5 455.9,471.9 453.3,462.6" fill="rgb(0,255,0)"/><polygon points="670.5,487.5 674.9,472.1 619.5,462.6 616.9,471.9" fill="rgb(0,255,0)"/><polygon points="439.9,571.5 453.5,581.7 453.5,551.0 439.9,540.9" fill="rgb(0,95,0)"/><polygon points="619.3,581.7 632.9,571.5 632.9,540.9 619.3,551.0" fill="rgb(0,217,0)"/><polygon points="402.3,487.5 408.8,502.4 459.9,480.7 455.9,471.9" fill="rgb(0,255,0)"/><polygon points="664.0,502.4 670.5,487.5 616.9,471.9 612.9,480.7" fill="rgb(0,255,0)"/><polygon points="453.5,581.7 468.5,590.2 468.5,559.6 453.5,551.0" fill="rgb(0,95,0)"/><polygon points="604.3,590.2 619.3,581.7 619.3,551.0 604.3,559.6" fill="rgb(0,211,0)"/><polygon points="408.8,502.4 417.3,516.3 465.0,489.1 459.9,480.7" fill="rgb(0,255,0)"/><polygon points="655.5,516.3 664.0,502.4 612.9,480.7 607.8,489.1" fill="rgb(0,255,0)"/><polygon points="468.5,590.2 484.5,597.0 484.5,566.3 468.5,559.6" fill="rgb(0,108,0)"/><polygon points="588.3,597.0 604.3,590.2 604.3,559.6 588.3,566.3" fill="rgb(0,203,0)"/><polygon points="484.5,597.0 501.3,602.0 501.3,571.3 484.5,566.3" fill="rgb(0,124,0)"/><polygon points="571.5,602.0 588.3,597.0 588.3,566.3 571.5,571.3" fill="rgb(0,193,0)"/><polygon points="501.3,602.0 518.7,604.9 518.7,574.3 501.3,571.3" fill="rgb(0,139,0)"/><polygon points="554.1,604.9 571.5,602.0 571.5,571.3 554.1,574.3" fill="rgb(0,181,0)"/><polygon points="417.3,516.3 427.8,529.2 471.2,496.9 465.0,489.1" fill="rgb(0,255,0)"/><polygon points="645.0,529.2 655.5,516.3 607.8,489.1 601.6,496.9" fill="rgb(0,255,0)"/><polygon points="518.7,604.9 536.4,605.9 536.4,575.3 518.7,574.3" fill="rgb(0,154,0)"/><polygon points="536.4,605.9 554.1,604.9 554.1,574.3 536.4,575.3" fill="rgb(0,168,0)"/><polygon points="427.8,529.2 439.9,540.9 478.5,503.8 471.2,496.9" fill="rgb(0,255,0)"/><polygon points="632.9,540.9 645.0,529.2 601.6,496.9 594.3,503.8" fill="rgb(0,255,0)"/><polygon points="439.9,540.9 453.5,551.0 486.7,509.9 478.5,503.8" fill="rgb(0,255,0)"/><polygon points="619.3,551.0 632.9,540.9 594.3,503.8 586.1,509.9" fill="rgb(0,255,0)"/><polygon points="453.5,551.0 468.5,559.6 495.6,515.1 486.7,509.9" fill="rgb(0,255,0)"/><polygon points="604.3,559.6 619.3,551.0 586.1,509.9 577.2,515.1" fill="rgb(0,255,0)"/><polygon points="468.5,559.6 484.5,566.3 505.3,519.1 495.6,515.1" fill="rgb(0,255,0)"/><polygon points="588.3,566.3 604.3,559.6 577.2,515.1 567.5,519.1" fill="rgb(0,255,0)"/><polygon points="484.5,566.3 501.3,571.3 515.4,522.1 505.3,519.1" fill="rgb(0,255,0)"/><polygon points="571.5,571.3 588.3,566.3 567.5,519.1 557.4,522.1" fill="rgb(0,255,0)"/><polygon points="501.3,571.3 518.7,574.3 525.8,523.9 515.4,522.1" fill="rgb(0,255,0)"/><polygon points="554.1,574.3 571.5,571.3 557.4,522.1 547.0,523.9" fill="rgb(0,255,0)"/><polygon points="518.7,574.3 536.4,575.3 536.4,524.5 525.8,523.9" fill="rgb(0,255,0)"/><polygon points="536.4,575.3 554.1,574.3 547.0,523.9 536.4,524.5" fill="rgb(0,255,0)"/></g></svg><div class="a" style="left:977px;top:0px;width:717px;height:5px;background:linear-gradient(to bottom,#f2f2f2,#e4e4e4)"></div><div class="a" style="left:977px;top:5px;width:717px;height:681px;background:#fff;border:1px solid #8f8f8f;border-right:none;box-shadow:-2px 0 9px rgba(0,0,0,.18)"></div><svg class="a" style="left:985px;top:11px" width="18" height="18" viewBox="0 0 20 20"><circle cx="10" cy="10.5" r="7" fill="none" stroke="#1a9ad0" stroke-width="2.2"/><rect x="1" y="6.5" width="5.5" height="5.5" fill="#f26b1d"/><rect x="13.5" y="3" width="3" height="3" fill="#f26b1d"/><rect x="14.5" y="14" width="3.5" height="3.5" fill="#f26b1d"/></svg><div id="w23" class="t" style="left:1007px;top:15px;color:#707070;font-size:12.5px;transform-origin:0 0;transform:scaleX(0.9493)">Editor</div><div class="a" style="left:978px;top:36px;width:716px;height:19px;background:#f0f0f0"></div><div id="w24" class="t" style="left:982px;top:41px;font-size:11px;transform-origin:0 0;transform:scaleX(0.9739)">Editor</div><div id="w25" class="t" style="left:986.5px;top:61px;color:#7a7a7a;font-size:11.5px;transform-origin:0 0;transform:scaleX(0.9713)">File</div><div id="w26" class="t" style="left:1020.5px;top:61px;color:#7a7a7a;font-size:11.5px;transform-origin:0 0;transform:scaleX(1.0087)">Edit</div><div id="w27" class="t" style="left:1056px;top:61px;color:#7a7a7a;font-size:11.5px;transform-origin:0 0;transform:scaleX(1.0316)">View</div><div id="w28" class="t" style="left:1097px;top:61px;color:#7a7a7a;font-size:11.5px;transform-origin:0 0;transform:scaleX(1.0327)">Debug</div><div id="w29" class="t" style="left:1147.5px;top:61px;color:#7a7a7a;font-size:11.5px;transform-origin:0 0;transform:scaleX(0.9948)">Run</div><div id="w30" class="t" style="left:1185px;top:61px;color:#7a7a7a;font-size:11.5px;transform-origin:0 0;transform:scaleX(1.0568)">Help</div><div class="a" style="left:978px;top:75px;width:716px;height:63px;background:#f0f0f0"></div><svg class="a" style="left:983px;top:79px" width="30" height="32" viewBox="0 0 30 32"><defs><radialGradient id="glow"><stop offset="0" stop-color="#ffffa0"/><stop offset=".45" stop-color="#f4e826"/><stop offset="1" stop-color="#f4e826" stop-opacity="0"/></radialGradient></defs><rect x="1.5" y="2.5" width="23" height="27" fill="#e6e6e6" stroke="#7b7b7b" stroke-width="1.3"/><circle cx="21" cy="6" r="7" fill="url(#glow)"/></svg><svg class="a" style="left:1020px;top:79px" width="32" height="30" viewBox="0 0 32 30"><path d="M2 6 L10 6 L10 4 L28 4 L26 20 L4 27 Z" fill="#8a8a8a" stroke="#666" stroke-width="1"/><path d="M8 2 L27 2 L24 14 L6 14 Z" fill="#f4f4f4" stroke="#777" stroke-width="1"/><path d="M9 11 L31 11 L28 27 L4 27 Z" fill="#6a9bd6" stroke="#4a78b0" stroke-width="1"/></svg><svg class="a" style="left:1060px;top:95px" width="8" height="5" viewBox="0 0 8 5"><path d="M0 0 L7 0 L3.5 4 Z" fill="#000"/></svg><svg class="a" style="left:1072px;top:79px" width="30" height="30" viewBox="0 0 30 30"><path d="M5 13 L25 13 L29 20 L29 29 L1 29 L1 20 Z" fill="#dedede" stroke="#8a8a8a"/><path d="M7 14.5 L23 14.5 L26 19.5 L4 19.5 Z" fill="#b8b8b8"/><rect x="3" y="22" width="24" height="5" fill="#c4c4c4"/><path d="M17 22 V27 M20 22 V27 M23 22 V27" stroke="#aaa"/><path d="M5 12 C5 3 18 1 18 10" fill="none" stroke="#9a9a9a" stroke-width="4.5"/><path d="M11 9 L25 9 L18 18 Z" fill="#9a9a9a" stroke="#7a7a7a" stroke-width=".6"/></svg><svg class="a" style="left:1112px;top:79px" width="30" height="30" viewBox="0 0 30 30"><path d="M5 13 L25 13 L29 20 L29 29 L1 29 L1 20 Z" fill="#dedede" stroke="#8a8a8a"/><path d="M7 14.5 L23 14.5 L26 19.5 L4 19.5 Z" fill="#b8b8b8"/><rect x="3" y="22" width="11" height="5" fill="#8a8a8a"/><rect x="15" y="22" width="12" height="5" fill="#fff" stroke="#999" stroke-width=".5"/><path d="M5 12 C5 3 18 1 18 10" fill="none" stroke="#3a7ad0" stroke-width="4.5"/><path d="M11 9 L25 9 L18 18 Z" fill="#3a7ad0" stroke="#2a5aa0" stroke-width=".6"/></svg><svg class="a" style="left:1152px;top:79px" width="30" height="30" viewBox="0 0 30 30"><rect x="8" y="2" width="14" height="11" fill="#eee" stroke="#999"/><path d="M15 4 L19 8 L17 8 L17 11 L13 11 L13 8 L11 8 Z" fill="#888"/><rect x="2" y="12" width="26" height="12" rx="2" fill="#e8e8e8" stroke="#8a8a8a"/><rect x="5" y="17" width="20" height="2" fill="#999"/></svg><div class="a" style="left:1189px;top:79px;width:1px;height:32px;background:#c8c8c8"></div><svg class="a" style="left:1196px;top:80px" width="28" height="30" viewBox="0 0 28 30"><ellipse cx="15" cy="27" rx="10" ry="2.5" fill="#000" opacity=".12"/><path d="M2 12 L11 3 L11 8 C21 8 26 14 24 24 C22 17 17 14 11 14 L11 19 Z" fill="#f0d020" stroke="#c8a000" stroke-width="1"/></svg><svg class="a" style="left:1236px;top:80px" width="28" height="30" viewBox="0 0 28 30"><ellipse cx="13" cy="27" rx="10" ry="2.5" fill="#000" opacity=".08"/><path d="M26 12 L17 3 L17 8 C7 8 2 14 4 24 C6 17 11 14 17 14 L17 19 Z" fill="#c4c4c4" stroke="#aaa" stroke-width="1"/></svg><div class="a" style="left:1275px;top:79px;width:1px;height:32px;background:#c8c8c8"></div><svg class="a" style="left:1281px;top:79px" width="28" height="32" viewBox="0 0 28 32"><path d="M8 2 L16 20 M20 2 L12 20" stroke="#8a8a8a" stroke-width="2"/><circle cx="8" cy="25" r="4.5" fill="none" stroke="#8a8a8a" stroke-width="2.2"/><circle cx="20" cy="25" r="4.5" fill="none" stroke="#8a8a8a" stroke-width="2.2"/></svg><svg class="a" style="left:1318px;top:78px" width="30" height="31" viewBox="0 0 30 31"><g opacity="0.45"><rect x="1" y="1" width="18" height="23" fill="#f6f6f6" stroke="#9a9a9a"/><path d="M8 7 L28 7 L28 25 L24 29 L8 29 Z" fill="#fafafa" stroke="#8a8a8a"/><path d="M11 12 H25 M11 15 H25 M11 18 H25 M11 21 H22" stroke="#aaa"/></g></svg><svg class="a" style="left:1359px;top:78px" width="27" height="31" viewBox="0 0 27 31"><rect x="1.5" y="4" width="24" height="26" rx="1.5" fill="#b07a2e" stroke="#8a5a1a"/><rect x="4.5" y="8" width="18" height="20" fill="#f2f2f2"/><rect x="8" y="1" width="11" height="6" rx="1" fill="#8c8c8c" stroke="#666"/><path d="M7 12 H20 M7 15 H20 M7 18 H20 M7 21 H16" stroke="#999"/><path d="M17 28 L22.5 22.5 L22.5 28 Z" fill="#777"/></svg><svg class="a" style="left:1396px;top:79px" width="28" height="30" viewBox="0 0 28 30"><rect x="2" y="2" width="24" height="26" fill="#f0f0f0" stroke="#888"/><circle cx="11" cy="10" r="6" fill="#cfe0f4" stroke="#7a9acb" stroke-width="1.5"/><path d="M7 14 L3 19" stroke="#999" stroke-width="2"/><path d="M8 26 L22 10 L25 13 L11 28 Z" fill="#e8a830" stroke="#a0601a" stroke-width=".6"/><path d="M22 10 L24 8 L27 11 L25 13 Z" fill="#d02020"/></svg><div class="a" style="left:1434px;top:79px;width:1px;height:32px;background:#c8c8c8"></div><svg class="a" style="left:1440px;top:78px" width="32" height="32" viewBox="0 0 32 32"><defs><linearGradient id="gg1440" x1="0" y1="0" x2="0" y2="1"><stop offset="0" stop-color="#6a80b8"/><stop offset="1" stop-color="#b8b0dc"/></linearGradient></defs><path d="M14.5 1.1 L17.4 1.1 L19.0 5.9 L20.9 6.7 L25.5 4.4 L27.6 6.5 L25.3 11.0 L26.0 12.9 L30.9 14.5 L30.9 17.4 L26.1 19.0 L25.3 20.9 L27.6 25.5 L25.5 27.6 L21.0 25.3 L19.1 26.0 L17.5 30.9 L14.6 30.9 L13.0 26.1 L11.1 25.3 L6.5 27.6 L4.4 25.5 L6.7 21.0 L6.0 19.1 L1.1 17.5 L1.1 14.6 L5.9 13.0 L6.7 11.1 L4.4 6.5 L6.5 4.4 L11.0 6.7 L12.9 6.0Z" fill="url(#gg1440)" stroke="#5a6aa0" stroke-width="1"/><circle cx="16" cy="16" r="4.5" fill="#f0f0f0" stroke="#5a6aa0"/></svg><svg class="a" style="left:1447px;top:82px" width="24" height="24" viewBox="0 0 24 24"><path d="M5 3 L21 12 L5 21 Z" fill="#f0e020" stroke="#b8a000"/></svg><div class="a" style="left:1479px;top:79px;width:1px;height:32px;background:#c8c8c8"></div><svg class="a" style="left:1490px;top:82px" width="27" height="27" viewBox="0 0 27 27"><circle cx="11" cy="12" r="9.5" fill="#e81818" stroke="#c01010"/><ellipse cx="11" cy="7" rx="6" ry="3" fill="#fff" opacity=".25"/></svg><svg class="a" style="left:1528px;top:82px" width="27" height="27" viewBox="0 0 27 27"><circle cx="11" cy="12" r="9.5" fill="#e81818" stroke="#c01010"/><path d="M25 7 L25 23 L12 16 Z" fill="#f0e020" stroke="#a89000"/></svg><svg class="a" style="left:1568px;top:82px" width="27" height="27" viewBox="0 0 27 27"><circle cx="10" cy="11" r="9.5" fill="#e81818" stroke="#c01010"/><path d="M11 6 L11 22 L24 14 Z" fill="#f0e020" stroke="#a89000"/></svg><svg class="a" style="left:1604px;top:78px" width="28" height="32" viewBox="0 0 28 32"><circle cx="17" cy="15" r="9" fill="#e81818"/><path d="M3 3 L11 13" stroke="#a0601a" stroke-width="3"/><path d="M8 12 L14 10 L24 27 L12 30 Z" fill="#f0d020" stroke="#b09000"/><path d="M8 13 L14 11" stroke="#d02020" stroke-width="2.5"/></svg><svg class="a" style="left:1640px;top:78px" width="36" height="32" viewBox="0 0 36 32"><rect x="2" y="2" width="12" height="8" fill="#a8c8ee" stroke="#5a8ac8"/><rect x="2" y="12" width="12" height="8" fill="#a8c8ee" stroke="#5a8ac8"/><rect x="2" y="22" width="12" height="8" fill="#a8c8ee" stroke="#5a8ac8"/><path d="M15 15 L22 9 L22 13 C28 13 30 10 28 4 C34 10 32 19 22 18 L22 22 Z" fill="#f0d020" stroke="#b09000"/></svg><div class="a" style="left:1683px;top:86px;width:11px;height:8px;background:#e4e4e4;border:1px solid #aaa;border-right:none"></div><div class="a" style="left:1683px;top:98px;width:11px;height:8px;background:#e4e4e4;border:1px solid #aaa;border-right:none"></div><div class="a" style="left:978px;top:113px;width:716px;height:25px;background:#f0f0f0"></div><div class="a" style="left:980px;top:114px;width:196px;height:24px;background:#fff;border:1px solid #d8d8d8;border-bottom:none"></div><div id="w31" class="t" style="left:989px;top:121px;font-size:11px;transform-origin:0 0;transform:scaleX(0.9458)">A__3D__Ring_Segmente__KB.m</div><svg class="a" style="left:1149px;top:118px" width="15" height="15" viewBox="0 0 15 15"><rect x=".5" y=".5" width="13" height="13" rx="2" fill="#e0503a" stroke="#b03020"/><path d="M4 4 L10 10 M10 4 L4 10" stroke="#fff" stroke-width="1.8"/></svg><div class="a" style="left:980px;top:138px;width:714px;height:548px;background:#fff;border-top:1px solid #a0a0a0;border-left:1px solid #a0a0a0"></div><div class="a" style="left:981px;top:139px;width:55px;height:547px;background:#dcdcdc"></div><div class="a" style="left:1036px;top:139px;width:14px;height:487px;background:repeating-conic-gradient(#b8b8b8 0 25%,#e6e6e6 0 50%) 0 0/2px 2px"></div><div class="a" style="left:1036px;top:626px;width:9px;height:60px;background:repeating-conic-gradient(#b8b8b8 0 25%,#e6e6e6 0 50%) 0 0/2px 2px"></div><div class="a" style="left:1691px;top:139px;width:3px;height:546px;background:#fff;border-left:1px solid #c0c0c0"></div><div class="c" style="left:1019.5px;top:141px;font-size:20.8px;color:#222">1</div><div class="c" style="left:1019.5px;top:165px;font-size:20.8px;color:#222">2</div><div class="c" style="left:1019.5px;top:189px;font-size:20.8px;color:#222">3</div><div class="c" style="left:1019.5px;top:213px;font-size:20.8px;color:#222">4</div><div class="c" style="left:1019.5px;top:237px;font-size:20.8px;color:#222">5</div><div class="c" style="left:1019.5px;top:261px;font-size:20.8px;color:#222">6</div><div class="c" style="left:1019.5px;top:285px;font-size:20.8px;color:#222">7</div><div class="c" style="left:1019.5px;top:309px;font-size:20.8px;color:#222">8</div><div class="c" style="left:1019.5px;top:333px;font-size:20.8px;color:#222">9</div><div class="c" style="left:1007.0px;top:357px;font-size:20.8px;color:#222">10</div><div class="c" style="left:1007.0px;top:381px;font-size:20.8px;color:#222">11</div><div class="c" style="left:1007.0px;top:405px;font-size:20.8px;color:#222">12</div><div class="c" style="left:1007.0px;top:429px;font-size:20.8px;color:#222">13</div><div class="c" style="left:1007.0px;top:453px;font-size:20.8px;color:#222">14</div><div class="c" style="left:1007.0px;top:477px;font-size:20.8px;color:#222">15</div><div class="c" style="left:1007.0px;top:501px;font-size:20.8px;color:#222">16</div><div class="c" style="left:1007.0px;top:525px;font-size:20.8px;color:#222">17</div><div class="c" style="left:1007.0px;top:549px;font-size:20.8px;color:#222">18</div><div class="c" style="left:1007.0px;top:573px;font-size:20.8px;color:#222">19</div><div class="c" style="left:1007.0px;top:597px;font-size:20.8px;color:#222">20</div><div class="a" style="left:981px;top:600px;width:55px;height:79px;overflow:hidden"><div class="c" style="left:26px;top:21px;font-size:20.8px;color:#222">21</div><div class="c" style="left:26px;top:45px;font-size:20.8px;color:#222">22</div><div class="c" style="left:26px;top:69px;font-size:20.8px;color:#222">23</div></div><div class="c" style="left:1051px;top:145px;font-size:15px;letter-spacing:1px;color:#0aa00a">% :::::::::::: 3D -Ring  mit cylinder :::::::::</div><div class="c" style="left:1051px;top:170px;">clear all<span class="o">;</span> close all<span class="o">;</span> clf</div><div class="c" style="left:1051px;top:194px;">disp<span class="o">([</span><span class="s">'°°°°°°°°°°°°° S T A R T °°°°°°°°°°°°°°°°°°° '</span><span class="o"> ,</span>date<span class="o">,</span><span class="s"> ' °°°°°°°°°°°°°°'</span><span class="o">])</span></div><div class="c" style="left:1051px;top:217px;font-size:15px;letter-spacing:1px;color:#0aa00a">% ::::::::::::::::::::::</div><div class="c" style="left:1051px;top:242px;"> scr <span class="o">=</span> <span class="k">get</span><span class="o">(</span><span class="n">0</span><span class="o">,</span><span class="s">'screensize'</span><span class="o">);</span></div><div class="c" style="left:1051px;top:266px;">scrNew <span class="o">=</span> <span class="o">[</span>scr <span class="o">]</span> <span class="o">+[</span><span class="n">300 220 </span><span class="o">-</span><span class="n">1200 </span><span class="o">-</span><span class="n">600</span><span class="o">];</span></div><div class="c" style="left:1051px;top:290px;"> <span class="k">set</span><span class="o">(</span>gcf<span class="o">,</span><span class="s">'position'</span><span class="o">,</span>scrNew<span class="o">);</span></div><div class="c" style="left:1051px;top:313px;font-size:15px;letter-spacing:1px;color:#0aa00a">% ::::::::::::::::::::::::</div><div class="c" style="left:1051px;top:338px;"><span class="o">[</span>x<span class="o">,</span> y<span class="o">,</span> z<span class="o">]</span> <span class="o">=</span> cylinder<span class="o">([</span><span class="n">1</span><span class="o">,</span> <span class="n">1</span><span class="o">,</span> <span class="n">0.6</span><span class="o">,</span> <span class="n">0.6</span><span class="o">,</span> <span class="n">1</span><span class="o">],</span> <span class="n">50</span><span class="o">);</span></div><div class="c" style="left:1051px;top:362px;">z<span class="o">([</span><span class="n">2</span><span class="o">,</span><span class="n">3</span><span class="o">],</span> <span class="o">:)</span> <span class="o">=</span> <span class="n">0.5</span><span class="o">;</span></div><div class="c" style="left:1051px;top:386px;">z<span class="o">([</span><span class="n">4</span><span class="o">,</span><span class="n">5</span><span class="o">],</span> <span class="o">:)</span> <span class="o">=</span> <span class="n">0</span><span class="o">;</span></div><div class="c" style="left:1051px;top:409px;font-size:15px;letter-spacing:1px;color:#0aa00a">% :::::::::::::::::::::</div><div class="c" style="left:1051px;top:434px;">      HB <span class="o">=</span> surf<span class="o">(</span>x<span class="o">,</span>y<span class="o">,</span>z<span class="o">);</span></div><div class="c" style="left:1051px;top:458px;">      axis equal off<span class="o">;</span></div><div class="c" style="left:1051px;top:482px;">      <span class="k">set</span><span class="o">(</span>HB<span class="o">,</span> <span class="s">'Facecolor'</span><span class="o">,[</span><span class="n">0</span><span class="o">,</span><span class="n">1</span><span class="o">,</span><span class="n">0</span><span class="o">])</span></div><div class="c" style="left:1051px;top:506px;">      camlight<span class="o">;</span> light</div><div class="c" style="left:1051px;top:530px;">  pause<span class="o">(</span><span class="n">1</span><span class="o">)</span></div><div class="c" style="left:1051px;top:553px;font-size:13.33px;color:#0aa00a">    <span style="font-size:15px;letter-spacing:1px">% :::::::::::: Farben zufällig pro Raster Segment :::::::::::</span></div><div class="c" style="left:1051px;top:578px;">Cidx <span class="o">=</span> <span class="k">get</span><span class="o">(</span>HB<span class="o">,</span><span class="s">'CData'</span><span class="o">);</span></div><div class="c" style="left:1051px;top:602px;">     <span class="k">set</span><span class="o">(</span>HB<span class="o">,</span><span class="s">'CData'</span><span class="o">,</span> rand<span class="o">(</span>size<span class="o">(</span><span class="k">get</span><span class="o">(</span>HB<span class="o">,</span><span class="s">'CData'</span><span class="o">))))</span></div><svg class="a" style="left:1248px;top:428px" width="92" height="26" viewBox="0 0 92 26"><path d="M3 12 L30 2 L30 7 L88 7 L88 18 L30 18 L30 23 Z" fill="none" stroke="#e01010" stroke-width="2.2" stroke-linejoin="round"/></svg><div class="a" style="left:1045px;top:626px;width:643px;height:54px;background:#fff"></div><div class="c" style="left:1061px;top:622px;font-size:14.9px;color:#111">% :::::::::::: oder hier drüber :::::::::</div><div class="c" style="left:1061px;top:639px;font-size:14.9px;color:#111">Sidx = findobj(HB,'type','<span style="color:#5555cc">surface</span>');</div><div class="c" style="left:1061px;top:656px;font-size:14.9px;color:#111">Pidx = findobj('Type','<span style="color:#e01010">patch</span>'),</div><div class="a" style="left:970px;top:679px;width:673px;height:5px;background:#3c46c4;border-radius:3px"></div><div class="a" style="left:852px;top:687px;width:842px;height:405px;background:#fff"></div><div id="w32" class="t" style="left:860px;top:690px;font-size:16.5px;transform-origin:0 0;transform:scaleX(1.0794)">Color a sphere with the pattern of +1s and -1s in a Hadamard matrix.</div><div class="c" style="left:910px;top:722.0px;font-size:18.5px;color:#222">k = 5;</div><div class="c" style="left:910px;top:753.4px;font-size:18.5px;color:#222">n = 2^k-1;</div><div class="c" style="left:910px;top:784.8px;font-size:18.5px;color:#222">[x,y,z] = sphere(n);</div><div class="c" style="left:910px;top:816.2px;font-size:18.5px;color:#222">c = hadamard(2^k);</div><div class="c" style="left:910px;top:847.6px;font-size:18.5px;color:#222">surf(x,y,z,c);</div><div class="c" style="left:910px;top:879.0px;font-size:18.5px;color:#222">colormap([1  1  0; 0  1  1])</div><div class="c" style="left:910px;top:910.4px;font-size:18.5px;color:#222">axis equal</div><div class="a" style="left:899px;top:812px;width:29px;height:28px;border:3px solid #e02020"></div><div class="a" style="left:1028px;top:842px;width:44px;height:32px;border:3px solid #e02020"></div><svg class="a" style="left:0;top:0" width="1694" height="1092"><line x1="1667.9" y1="1027.4" x2="1667.9" y2="817.0" stroke="#000" stroke-width=".8" stroke-dasharray="1.2,2.2"/><line x1="1667.9" y1="1027.4" x2="1519.9" y2="931.0" stroke="#000" stroke-width=".8" stroke-dasharray="1.2,2.2"/><line x1="1327.1" y1="1005.0" x2="1327.1" y2="794.6" stroke="#000" stroke-width=".8" stroke-dasharray="1.2,2.2"/><line x1="1327.1" y1="1005.0" x2="1519.9" y2="931.0" stroke="#000" stroke-width=".8" stroke-dasharray="1.2,2.2"/><line x1="1475.1" y1="1101.4" x2="1327.1" y2="1005.0" stroke="#000" stroke-width=".8" stroke-dasharray="1.2,2.2"/><line x1="1475.1" y1="1101.4" x2="1667.9" y2="1027.4" stroke="#000" stroke-width=".8" stroke-dasharray="1.2,2.2"/><line x1="1630.9" y1="1003.3" x2="1630.9" y2="792.9" stroke="#000" stroke-width=".8" stroke-dasharray="1.2,2.2"/><line x1="1667.9" y1="974.8" x2="1519.9" y2="878.4" stroke="#000" stroke-width=".8" stroke-dasharray="1.2,2.2"/><line x1="1375.3" y1="986.5" x2="1375.3" y2="776.1" stroke="#000" stroke-width=".8" stroke-dasharray="1.2,2.2"/><line x1="1327.1" y1="952.4" x2="1519.9" y2="878.4" stroke="#000" stroke-width=".8" stroke-dasharray="1.2,2.2"/><line x1="1523.3" y1="1082.9" x2="1375.3" y2="986.5" stroke="#000" stroke-width=".8" stroke-dasharray="1.2,2.2"/><line x1="1438.1" y1="1077.3" x2="1630.9" y2="1003.3" stroke="#000" stroke-width=".8" stroke-dasharray="1.2,2.2"/><line x1="1593.9" y1="979.2" x2="1593.9" y2="768.8" stroke="#000" stroke-width=".8" stroke-dasharray="1.2,2.2"/><line x1="1667.9" y1="922.2" x2="1519.9" y2="825.8" stroke="#000" stroke-width=".8" stroke-dasharray="1.2,2.2"/><line x1="1423.5" y1="968.0" x2="1423.5" y2="757.6" stroke="#000" stroke-width=".8" stroke-dasharray="1.2,2.2"/><line x1="1327.1" y1="899.8" x2="1519.9" y2="825.8" stroke="#000" stroke-width=".8" stroke-dasharray="1.2,2.2"/><line x1="1571.5" y1="1064.4" x2="1423.5" y2="968.0" stroke="#000" stroke-width=".8" stroke-dasharray="1.2,2.2"/><line x1="1401.1" y1="1053.2" x2="1593.9" y2="979.2" stroke="#000" stroke-width=".8" stroke-dasharray="1.2,2.2"/><line x1="1556.9" y1="955.1" x2="1556.9" y2="744.7" stroke="#000" stroke-width=".8" stroke-dasharray="1.2,2.2"/><line x1="1667.9" y1="869.6" x2="1519.9" y2="773.2" stroke="#000" stroke-width=".8" stroke-dasharray="1.2,2.2"/><line x1="1471.7" y1="949.5" x2="1471.7" y2="739.1" stroke="#000" stroke-width=".8" stroke-dasharray="1.2,2.2"/><line x1="1327.1" y1="847.2" x2="1519.9" y2="773.2" stroke="#000" stroke-width=".8" stroke-dasharray="1.2,2.2"/><line x1="1619.7" y1="1045.9" x2="1471.7" y2="949.5" stroke="#000" stroke-width=".8" stroke-dasharray="1.2,2.2"/><line x1="1364.1" y1="1029.1" x2="1556.9" y2="955.1" stroke="#000" stroke-width=".8" stroke-dasharray="1.2,2.2"/><line x1="1519.9" y1="931.0" x2="1519.9" y2="720.6" stroke="#000" stroke-width=".8" stroke-dasharray="1.2,2.2"/><line x1="1667.9" y1="817.0" x2="1519.9" y2="720.6" stroke="#000" stroke-width=".8" stroke-dasharray="1.2,2.2"/><line x1="1519.9" y1="931.0" x2="1519.9" y2="720.6" stroke="#000" stroke-width=".8" stroke-dasharray="1.2,2.2"/><line x1="1327.1" y1="794.6" x2="1519.9" y2="720.6" stroke="#000" stroke-width=".8" stroke-dasharray="1.2,2.2"/><line x1="1667.9" y1="1027.4" x2="1519.9" y2="931.0" stroke="#000" stroke-width=".8" stroke-dasharray="1.2,2.2"/><line x1="1327.1" y1="1005.0" x2="1519.9" y2="931.0" stroke="#000" stroke-width=".8" stroke-dasharray="1.2,2.2"/><line x1="1327.1" y1="1005.0" x2="1327.1" y2="794.6" stroke="#000" stroke-width="1"/><line x1="1327.1" y1="1005.0" x2="1475.1" y2="1101.4" stroke="#000" stroke-width="1"/><line x1="1475.1" y1="1101.4" x2="1667.9" y2="1027.4" stroke="#000" stroke-width="1"/><g stroke="#000" stroke-width=".8" stroke-linejoin="round"><polygon points="1483.8,790.6 1470.4,792.7 1474.5,791.9 1485.9,790.1" fill="#00ffff"/><polygon points="1525.1,792.8 1511.8,790.7 1509.6,790.1 1521.0,792.0" fill="#ffff00"/><polygon points="1452.6,798.6 1440.4,803.8 1447.4,800.6 1458.1,796.1" fill="#ffff00"/><polygon points="1514.9,1031.2 1525.9,1028.8 1530.9,1027.8 1518.0,1030.5" fill="#ffff00"/><polygon points="1390.8,854.4 1385.0,865.6 1389.7,856.2 1395.4,845.5" fill="#00ffff"/><polygon points="1433.9,808.0 1423.0,815.1 1430.5,810.1 1440.4,803.8" fill="#ffff00"/><polygon points="1468.7,1028.7 1479.6,1031.1 1476.4,1030.4 1463.6,1027.6" fill="#00ffff"/><polygon points="1555.1,804.0 1543.0,798.8 1537.4,796.2 1548.0,800.8" fill="#ffff00"/><polygon points="1377.6,896.2 1376.3,908.5 1377.5,897.9 1378.9,885.7" fill="#ffff00"/><polygon points="1572.4,815.4 1561.6,808.3 1555.1,804.0 1564.8,810.4" fill="#ffff00"/><polygon points="1610.2,866.1 1604.5,854.9 1600.0,845.9 1605.4,856.6" fill="#ffff00"/><polygon points="1618.7,909.0 1617.5,896.7 1616.3,886.2 1617.4,898.4" fill="#00ffff"/><polygon points="1397.6,979.4 1404.7,989.2 1399.4,981.2 1391.8,970.8" fill="#ffff00"/><polygon points="1589.9,989.6 1597.2,979.8 1603.0,971.2 1595.2,981.6" fill="#00ffff"/><polygon points="1566.9,1010.6 1576.4,1003.1 1583.6,996.7 1573.2,1005.0" fill="#ffff00"/><polygon points="1418.3,1002.7 1427.6,1010.3 1421.3,1004.7 1411.1,996.4" fill="#ffff00"/><polygon points="1503.2,1032.3 1514.9,1031.2 1518.0,1030.5 1504.2,1031.9" fill="#00ffff"/><polygon points="1479.6,1031.1 1491.3,1032.3 1490.2,1031.9 1476.4,1030.4" fill="#ffff00"/><polygon points="1470.4,792.7 1458.1,796.1 1464.0,794.7 1474.5,791.9" fill="#ffff00"/><polygon points="1380.0,940.1 1383.5,951.9 1381.1,941.7 1377.5,929.7" fill="#00ffff"/><polygon points="1537.4,796.2 1525.1,792.8 1521.0,792.0 1531.4,794.9" fill="#00ffff"/><polygon points="1611.2,952.4 1614.9,940.6 1617.4,930.2 1613.6,942.2" fill="#00ffff"/><polygon points="1491.3,1032.3 1503.2,1032.3 1504.2,1031.9 1490.2,1031.9" fill="#ffff00"/><polygon points="1416.2,821.0 1407.5,829.7 1415.0,823.0 1423.0,815.1" fill="#ffff00"/><polygon points="1530.9,1027.8 1542.5,1023.8 1548.8,1021.0 1535.6,1025.5" fill="#00ffff"/><polygon points="1452.1,1023.6 1463.6,1027.6 1458.8,1025.4 1445.7,1020.8" fill="#00ffff"/><polygon points="1587.7,830.1 1579.3,821.4 1572.4,815.4 1580.2,823.4" fill="#00ffff"/><polygon points="1548.8,1021.0 1559.9,1015.2 1566.9,1010.6 1554.6,1017.0" fill="#00ffff"/><polygon points="1434.7,1014.9 1445.7,1020.8 1439.9,1016.8 1427.6,1010.3" fill="#00ffff"/><polygon points="1395.4,845.5 1389.7,856.2 1395.6,847.3 1401.0,837.2" fill="#ffff00"/><polygon points="1378.9,885.7 1377.5,897.9 1380.0,887.4 1381.3,875.5" fill="#00ffff"/><polygon points="1605.4,856.6 1600.0,845.9 1594.3,837.6 1599.5,847.7" fill="#ffff00"/><polygon points="1617.4,898.4 1616.3,886.2 1613.8,876.0 1614.9,887.9" fill="#00ffff"/><polygon points="1440.4,803.8 1430.5,810.1 1438.8,806.2 1447.4,800.6" fill="#00ffff"/><polygon points="1497.7,789.5 1485.9,790.1 1488.1,790.8 1497.7,790.3" fill="#ffff00"/><polygon points="1509.6,790.1 1497.7,789.5 1497.7,790.3 1507.3,790.9" fill="#00ffff"/><polygon points="1458.1,796.1 1447.4,800.6 1454.9,798.6 1464.0,794.7" fill="#00ffff"/><polygon points="1377.5,929.7 1381.1,941.7 1379.9,931.3 1376.3,919.1" fill="#00ffff"/><polygon points="1391.8,970.8 1399.4,981.2 1395.0,972.4 1387.1,961.6" fill="#00ffff"/><polygon points="1564.8,810.4 1555.1,804.0 1548.0,800.8 1556.6,806.4" fill="#ffff00"/><polygon points="1595.2,981.6 1603.0,971.2 1607.7,962.1 1599.6,972.8" fill="#00ffff"/><polygon points="1548.0,800.8 1537.4,796.2 1531.4,794.9 1540.4,798.8" fill="#ffff00"/><polygon points="1613.6,942.2 1617.4,930.2 1618.7,919.7 1614.8,931.8" fill="#00ffff"/><polygon points="1485.9,790.1 1474.5,791.9 1478.8,792.3 1488.1,790.8" fill="#ffff00"/><polygon points="1411.1,996.4 1421.3,1004.7 1415.7,998.0 1404.7,989.2" fill="#ffff00"/><polygon points="1521.0,792.0 1509.6,790.1 1507.3,790.9 1516.6,792.3" fill="#00ffff"/><polygon points="1518.0,1030.5 1530.9,1027.8 1535.6,1025.5 1520.9,1028.6" fill="#00ffff"/><polygon points="1573.2,1005.0 1583.6,996.7 1589.9,989.6 1578.8,998.4" fill="#00ffff"/><polygon points="1463.6,1027.6 1476.4,1030.4 1473.5,1028.5 1458.8,1025.4" fill="#ffff00"/><polygon points="1423.0,815.1 1415.0,823.0 1423.4,817.3 1430.5,810.1" fill="#00ffff"/><polygon points="1401.0,837.2 1395.6,847.3 1402.6,839.1 1407.5,829.7" fill="#ffff00"/><polygon points="1381.3,875.5 1380.0,887.4 1383.7,877.1 1385.0,865.6" fill="#00ffff"/><polygon points="1580.2,823.4 1572.4,815.4 1564.8,810.4 1571.8,817.6" fill="#00ffff"/><polygon points="1614.9,887.9 1613.8,876.0 1610.2,866.1 1611.3,877.6" fill="#00ffff"/><polygon points="1599.5,847.7 1594.3,837.6 1587.7,830.1 1592.5,839.5" fill="#00ffff"/><polygon points="1474.5,791.9 1464.0,794.7 1470.3,794.6 1478.8,792.3" fill="#00ffff"/><polygon points="1531.4,794.9 1521.0,792.0 1516.6,792.3 1525.0,794.7" fill="#ffff00"/><polygon points="1504.2,1031.9 1518.0,1030.5 1520.9,1028.6 1505.2,1030.2" fill="#ffff00"/><polygon points="1476.4,1030.4 1490.2,1031.9 1489.2,1030.2 1473.5,1028.5" fill="#ffff00"/><polygon points="1535.6,1025.5 1548.8,1021.0 1554.6,1017.0 1539.9,1022.1" fill="#ffff00"/><polygon points="1554.6,1017.0 1566.9,1010.6 1573.2,1005.0 1559.8,1012.0" fill="#ffff00"/><polygon points="1427.6,1010.3 1439.9,1016.8 1434.6,1011.7 1421.3,1004.7" fill="#00ffff"/><polygon points="1445.7,1020.8 1458.8,1025.4 1454.4,1021.9 1439.9,1016.8" fill="#ffff00"/><polygon points="1376.3,919.1 1379.9,931.3 1379.9,920.6 1376.3,908.5" fill="#00ffff"/><polygon points="1490.2,1031.9 1504.2,1031.9 1505.2,1030.2 1489.2,1030.2" fill="#ffff00"/><polygon points="1387.1,961.6 1395.0,972.4 1391.7,963.1 1383.5,951.9" fill="#00ffff"/><polygon points="1614.8,931.8 1618.7,919.7 1618.7,909.0 1614.8,921.1" fill="#ffff00"/><polygon points="1599.6,972.8 1607.7,962.1 1611.2,952.4 1602.9,963.5" fill="#ffff00"/><polygon points="1447.4,800.6 1438.8,806.2 1447.6,803.3 1454.9,798.6" fill="#00ffff"/><polygon points="1556.6,806.4 1548.0,800.8 1540.4,798.8 1547.7,803.5" fill="#00ffff"/><polygon points="1385.0,865.6 1383.7,877.1 1388.5,867.2 1389.7,856.2" fill="#ffff00"/><polygon points="1404.7,989.2 1415.7,998.0 1411.0,990.5 1399.4,981.2" fill="#00ffff"/><polygon points="1407.5,829.7 1402.6,839.1 1410.5,831.7 1415.0,823.0" fill="#00ffff"/><polygon points="1578.8,998.4 1589.9,989.6 1595.2,981.6 1583.5,990.9" fill="#ffff00"/><polygon points="1464.0,794.7 1454.9,798.6 1462.9,797.7 1470.3,794.6" fill="#00ffff"/><polygon points="1430.5,810.1 1423.4,817.3 1432.5,812.4 1438.8,806.2" fill="#00ffff"/><polygon points="1611.3,877.6 1610.2,866.1 1605.4,856.6 1606.4,867.7" fill="#00ffff"/><polygon points="1540.4,798.8 1531.4,794.9 1525.0,794.7 1532.4,797.9" fill="#ffff00"/><polygon points="1592.5,839.5 1587.7,830.1 1580.2,823.4 1584.6,832.0" fill="#ffff00"/><polygon points="1571.8,817.6 1564.8,810.4 1556.6,806.4 1562.7,812.7" fill="#ffff00"/><polygon points="1497.7,790.3 1488.1,790.8 1490.3,792.8 1497.7,792.4" fill="#ffff00"/><polygon points="1507.3,790.9 1497.7,790.3 1497.7,792.4 1505.0,792.8" fill="#ffff00"/><polygon points="1376.3,908.5 1379.9,920.6 1381.1,909.9 1377.5,897.9" fill="#ffff00"/><polygon points="1488.1,790.8 1478.8,792.3 1483.3,793.9 1490.3,792.8" fill="#00ffff"/><polygon points="1520.9,1028.6 1535.6,1025.5 1539.9,1022.1 1523.5,1025.6" fill="#00ffff"/><polygon points="1458.8,1025.4 1473.5,1028.5 1470.8,1025.5 1454.4,1021.9" fill="#ffff00"/><polygon points="1614.8,921.1 1618.7,909.0 1617.4,898.4 1613.6,910.4" fill="#00ffff"/><polygon points="1516.6,792.3 1507.3,790.9 1505.0,792.8 1512.0,793.9" fill="#00ffff"/><polygon points="1383.5,951.9 1391.7,963.1 1389.5,953.2 1381.1,941.7" fill="#ffff00"/><polygon points="1602.9,963.5 1611.2,952.4 1613.6,942.2 1605.1,953.6" fill="#ffff00"/><polygon points="1389.7,856.2 1388.5,867.2 1394.5,857.7 1395.6,847.3" fill="#ffff00"/><polygon points="1421.3,1004.7 1434.6,1011.7 1430.0,1005.6 1415.7,998.0" fill="#00ffff"/><polygon points="1559.8,1012.0 1573.2,1005.0 1578.8,998.4 1564.3,1005.9" fill="#ffff00"/><polygon points="1478.8,792.3 1470.3,794.6 1476.8,795.6 1483.3,793.9" fill="#00ffff"/><polygon points="1415.0,823.0 1410.5,831.7 1419.3,825.0 1423.4,817.3" fill="#00ffff"/><polygon points="1606.4,867.7 1605.4,856.6 1599.5,847.7 1600.5,858.2" fill="#ffff00"/><polygon points="1525.0,794.7 1516.6,792.3 1512.0,793.9 1518.4,795.7" fill="#00ffff"/><polygon points="1539.9,1022.1 1554.6,1017.0 1559.8,1012.0 1543.8,1017.5" fill="#00ffff"/><polygon points="1439.9,1016.8 1454.4,1021.9 1450.5,1017.3 1434.6,1011.7" fill="#00ffff"/><polygon points="1454.9,798.6 1447.6,803.3 1456.9,801.5 1462.9,797.7" fill="#00ffff"/><polygon points="1438.8,806.2 1432.5,812.4 1442.3,808.6 1447.6,803.3" fill="#ffff00"/><polygon points="1505.2,1030.2 1520.9,1028.6 1523.5,1025.6 1506.0,1027.3" fill="#00ffff"/><polygon points="1584.6,832.0 1580.2,823.4 1571.8,817.6 1575.8,825.3" fill="#00ffff"/><polygon points="1473.5,1028.5 1489.2,1030.2 1488.2,1027.3 1470.8,1025.5" fill="#00ffff"/><polygon points="1399.4,981.2 1411.0,990.5 1407.1,982.2 1395.0,972.4" fill="#00ffff"/><polygon points="1547.7,803.5 1540.4,798.8 1532.4,797.9 1538.3,801.7" fill="#00ffff"/><polygon points="1583.5,990.9 1595.2,981.6 1599.6,972.8 1587.3,982.6" fill="#00ffff"/><polygon points="1377.5,897.9 1381.1,909.9 1383.5,899.1 1380.0,887.4" fill="#ffff00"/><polygon points="1562.7,812.7 1556.6,806.4 1547.7,803.5 1552.9,808.9" fill="#ffff00"/><polygon points="1489.2,1030.2 1505.2,1030.2 1506.0,1027.3 1488.2,1027.3" fill="#ffff00"/><polygon points="1613.6,910.4 1617.4,898.4 1614.9,887.9 1611.2,899.6" fill="#ffff00"/><polygon points="1470.3,794.6 1462.9,797.7 1471.2,798.0 1476.8,795.6" fill="#ffff00"/><polygon points="1381.1,941.7 1389.5,953.2 1388.3,942.8 1379.9,931.3" fill="#00ffff"/><polygon points="1395.6,847.3 1394.5,857.7 1401.5,848.8 1402.6,839.1" fill="#00ffff"/><polygon points="1532.4,797.9 1525.0,794.7 1518.4,795.7 1524.0,798.1" fill="#ffff00"/><polygon points="1605.1,953.6 1613.6,942.2 1614.8,931.8 1606.2,943.3" fill="#00ffff"/><polygon points="1600.5,858.2 1599.5,847.7 1592.5,839.5 1593.4,849.2" fill="#ffff00"/><polygon points="1423.4,817.3 1419.3,825.0 1428.9,819.2 1432.5,812.4" fill="#00ffff"/><polygon points="1497.7,792.4 1490.3,792.8 1492.7,795.9 1497.6,795.7" fill="#00ffff"/><polygon points="1575.8,825.3 1571.8,817.6 1562.7,812.7 1566.2,819.5" fill="#ffff00"/><polygon points="1380.0,887.4 1383.5,899.1 1387.1,888.5 1383.7,877.1" fill="#ffff00"/><polygon points="1505.0,792.8 1497.7,792.4 1497.6,795.7 1502.5,796.0" fill="#ffff00"/><polygon points="1523.5,1025.6 1539.9,1022.1 1543.8,1017.5 1525.9,1021.3" fill="#00ffff"/><polygon points="1454.4,1021.9 1470.8,1025.5 1468.4,1021.2 1450.5,1017.3" fill="#00ffff"/><polygon points="1415.7,998.0 1430.0,1005.6 1426.1,998.6 1411.0,990.5" fill="#00ffff"/><polygon points="1490.3,792.8 1483.3,793.9 1487.9,796.7 1492.7,795.9" fill="#00ffff"/><polygon points="1447.6,803.3 1442.3,808.6 1452.6,805.9 1456.9,801.5" fill="#00ffff"/><polygon points="1564.3,1005.9 1578.8,998.4 1583.5,990.9 1568.2,998.9" fill="#ffff00"/><polygon points="1611.2,899.6 1614.9,887.9 1611.3,877.6 1607.7,889.0" fill="#ffff00"/><polygon points="1512.0,793.9 1505.0,792.8 1502.5,796.0 1507.2,796.7" fill="#ffff00"/><polygon points="1462.9,797.7 1456.9,801.5 1466.7,800.9 1471.2,798.0" fill="#00ffff"/><polygon points="1395.0,972.4 1407.1,982.2 1404.2,973.2 1391.7,963.1" fill="#00ffff"/><polygon points="1552.9,808.9 1547.7,803.5 1538.3,801.7 1542.5,806.1" fill="#00ffff"/><polygon points="1402.6,839.1 1401.5,848.8 1409.5,840.5 1410.5,831.7" fill="#00ffff"/><polygon points="1587.3,982.6 1599.6,972.8 1602.9,963.5 1590.2,973.6" fill="#ffff00"/><polygon points="1538.3,801.7 1532.4,797.9 1524.0,798.1 1528.4,801.0" fill="#ffff00"/><polygon points="1483.3,793.9 1476.8,795.6 1483.6,797.9 1487.9,796.7" fill="#00ffff"/><polygon points="1434.6,1011.7 1450.5,1017.3 1447.1,1011.6 1430.0,1005.6" fill="#ffff00"/><polygon points="1543.8,1017.5 1559.8,1012.0 1564.3,1005.9 1547.2,1011.8" fill="#ffff00"/><polygon points="1379.9,931.3 1388.3,942.8 1388.3,932.2 1379.9,920.6" fill="#ffff00"/><polygon points="1518.4,795.7 1512.0,793.9 1507.2,796.7 1511.6,797.9" fill="#ffff00"/><polygon points="1593.4,849.2 1592.5,839.5 1584.6,832.0 1585.4,840.9" fill="#ffff00"/><polygon points="1606.2,943.3 1614.8,931.8 1614.8,921.1 1606.2,932.6" fill="#00ffff"/><polygon points="1432.5,812.4 1428.9,819.2 1439.3,814.4 1442.3,808.6" fill="#00ffff"/><polygon points="1383.7,877.1 1387.1,888.5 1391.8,878.1 1388.5,867.2" fill="#ffff00"/><polygon points="1506.0,1027.3 1523.5,1025.6 1525.9,1021.3 1506.8,1023.2" fill="#00ffff"/><polygon points="1470.8,1025.5 1488.2,1027.3 1487.4,1023.2 1468.4,1021.2" fill="#00ffff"/><polygon points="1566.2,819.5 1562.7,812.7 1552.9,808.9 1555.8,814.7" fill="#00ffff"/><polygon points="1476.8,795.6 1471.2,798.0 1479.8,799.5 1483.6,797.9" fill="#00ffff"/><polygon points="1607.7,889.0 1611.3,877.6 1606.4,867.7 1603.0,878.6" fill="#00ffff"/><polygon points="1524.0,798.1 1518.4,795.7 1511.6,797.9 1515.3,799.5" fill="#ffff00"/><polygon points="1410.5,831.7 1409.5,840.5 1418.4,833.0 1419.3,825.0" fill="#ffff00"/><polygon points="1488.2,1027.3 1506.0,1027.3 1506.8,1023.2 1487.4,1023.2" fill="#00ffff"/><polygon points="1456.9,801.5 1452.6,805.9 1463.4,804.2 1466.7,800.9" fill="#ffff00"/><polygon points="1585.4,840.9 1584.6,832.0 1575.8,825.3 1576.5,833.3" fill="#ffff00"/><polygon points="1542.5,806.1 1538.3,801.7 1528.4,801.0 1531.7,804.4" fill="#00ffff"/><polygon points="1391.7,963.1 1404.2,973.2 1402.2,963.5 1389.5,953.2" fill="#00ffff"/><polygon points="1379.9,920.6 1388.3,932.2 1389.5,921.3 1381.1,909.9" fill="#ffff00"/><polygon points="1411.0,990.5 1426.1,998.6 1422.9,990.6 1407.1,982.2" fill="#00ffff"/><polygon points="1471.2,798.0 1466.7,800.9 1476.8,801.4 1479.8,799.5" fill="#00ffff"/><polygon points="1590.2,973.6 1602.9,963.5 1605.1,953.6 1592.2,963.9" fill="#00ffff"/><polygon points="1442.3,808.6 1439.3,814.4 1450.2,810.6 1452.6,805.9" fill="#ffff00"/><polygon points="1568.2,998.9 1583.5,990.9 1587.3,982.6 1571.3,990.9" fill="#ffff00"/><polygon points="1388.5,867.2 1391.8,878.1 1397.6,868.1 1394.5,857.7" fill="#00ffff"/><polygon points="1606.2,932.6 1614.8,921.1 1613.6,910.4 1605.1,921.7" fill="#00ffff"/><polygon points="1528.4,801.0 1524.0,798.1 1515.3,799.5 1518.3,801.5" fill="#00ffff"/><polygon points="1555.8,814.7 1552.9,808.9 1542.5,806.1 1544.9,810.8" fill="#ffff00"/><polygon points="1603.0,878.6 1606.4,867.7 1600.5,858.2 1597.2,868.5" fill="#00ffff"/><polygon points="1419.3,825.0 1418.4,833.0 1428.2,826.2 1428.9,819.2" fill="#00ffff"/><polygon points="1497.6,795.7 1492.7,795.9 1495.1,800.3 1497.6,800.2" fill="#00ffff"/><polygon points="1450.5,1017.3 1468.4,1021.2 1466.2,1015.8 1447.1,1011.6" fill="#00ffff"/><polygon points="1525.9,1021.3 1543.8,1017.5 1547.2,1011.8 1528.0,1015.9" fill="#00ffff"/><polygon points="1502.5,796.0 1497.6,795.7 1497.6,800.2 1500.0,800.3" fill="#00ffff"/><polygon points="1492.7,795.9 1487.9,796.7 1492.7,800.7 1495.1,800.3" fill="#ffff00"/><polygon points="1507.2,796.7 1502.5,796.0 1500.0,800.3 1502.4,800.7" fill="#ffff00"/><polygon points="1576.5,833.3 1575.8,825.3 1566.2,819.5 1566.8,826.5" fill="#ffff00"/><polygon points="1430.0,1005.6 1447.1,1011.6 1444.2,1004.9 1426.1,998.6" fill="#00ffff"/><polygon points="1547.2,1011.8 1564.3,1005.9 1568.2,998.9 1550.0,1005.1" fill="#ffff00"/><polygon points="1487.9,796.7 1483.6,797.9 1490.5,801.3 1492.7,800.7" fill="#00ffff"/><polygon points="1511.6,797.9 1507.2,796.7 1502.4,800.7 1504.6,801.3" fill="#00ffff"/><polygon points="1466.7,800.9 1463.4,804.2 1474.6,803.6 1476.8,801.4" fill="#00ffff"/><polygon points="1394.5,857.7 1397.6,868.1 1404.4,858.4 1401.5,848.8" fill="#00ffff"/><polygon points="1452.6,805.9 1450.2,810.6 1461.6,807.8 1463.4,804.2" fill="#ffff00"/><polygon points="1381.1,909.9 1389.5,921.3 1391.7,910.3 1383.5,899.1" fill="#00ffff"/><polygon points="1483.6,797.9 1479.8,799.5 1488.6,802.1 1490.5,801.3" fill="#ffff00"/><polygon points="1531.7,804.4 1528.4,801.0 1518.3,801.5 1520.5,803.7" fill="#00ffff"/><polygon points="1428.9,819.2 1428.2,826.2 1438.6,820.4 1439.3,814.4" fill="#ffff00"/><polygon points="1605.1,921.7 1613.6,910.4 1611.2,899.6 1602.9,910.7" fill="#00ffff"/><polygon points="1597.2,868.5 1600.5,858.2 1593.4,849.2 1590.4,858.8" fill="#ffff00"/><polygon points="1515.3,799.5 1511.6,797.9 1504.6,801.3 1506.4,802.1" fill="#ffff00"/><polygon points="1544.9,810.8 1542.5,806.1 1531.7,804.4 1533.5,807.9" fill="#00ffff"/><polygon points="1389.5,953.2 1402.2,963.5 1401.2,953.3 1388.3,942.8" fill="#ffff00"/><polygon points="1592.2,963.9 1605.1,953.6 1606.2,943.3 1593.1,953.7" fill="#ffff00"/><polygon points="1566.8,826.5 1566.2,819.5 1555.8,814.7 1556.4,820.6" fill="#ffff00"/><polygon points="1468.4,1021.2 1487.4,1023.2 1486.6,1017.9 1466.2,1015.8" fill="#ffff00"/><polygon points="1506.8,1023.2 1525.9,1021.3 1528.0,1015.9 1507.5,1018.0" fill="#ffff00"/><polygon points="1479.8,799.5 1476.8,801.4 1487.1,803.0 1488.6,802.1" fill="#00ffff"/><polygon points="1407.1,982.2 1422.9,990.6 1420.5,981.8 1404.2,973.2" fill="#00ffff"/><polygon points="1571.3,990.9 1587.3,982.6 1590.2,973.6 1573.7,982.2" fill="#ffff00"/><polygon points="1518.3,801.5 1515.3,799.5 1506.4,802.1 1508.0,803.1" fill="#ffff00"/><polygon points="1401.5,848.8 1404.4,858.4 1412.2,849.4 1409.5,840.5" fill="#00ffff"/><polygon points="1487.4,1023.2 1506.8,1023.2 1507.5,1018.0 1486.6,1017.9" fill="#00ffff"/><polygon points="1439.3,814.4 1438.6,820.4 1449.6,815.4 1450.2,810.6" fill="#ffff00"/><polygon points="1463.4,804.2 1461.6,807.8 1473.3,806.0 1474.6,803.6" fill="#00ffff"/><polygon points="1590.4,858.8 1593.4,849.2 1585.4,840.9 1582.7,849.7" fill="#ffff00"/><polygon points="1383.5,899.1 1391.7,910.3 1395.0,899.3 1387.1,888.5" fill="#ffff00"/><polygon points="1476.8,801.4 1474.6,803.6 1486.0,804.2 1487.1,803.0" fill="#ffff00"/><polygon points="1533.5,807.9 1531.7,804.4 1520.5,803.7 1521.7,806.1" fill="#00ffff"/><polygon points="1556.4,820.6 1555.8,814.7 1544.9,810.8 1545.3,815.6" fill="#ffff00"/><polygon points="1602.9,910.7 1611.2,899.6 1607.7,889.0 1599.6,899.8" fill="#ffff00"/><polygon points="1520.5,803.7 1518.3,801.5 1508.0,803.1 1509.0,804.2" fill="#00ffff"/><polygon points="1409.5,840.5 1412.2,849.4 1420.8,840.9 1418.4,833.0" fill="#00ffff"/><polygon points="1450.2,810.6 1449.6,815.4 1461.2,811.4 1461.6,807.8" fill="#00ffff"/><polygon points="1447.1,1011.6 1466.2,1015.8 1464.4,1009.3 1444.2,1004.9" fill="#ffff00"/><polygon points="1528.0,1015.9 1547.2,1011.8 1550.0,1005.1 1529.7,1009.4" fill="#ffff00"/><polygon points="1426.1,998.6 1444.2,1004.9 1441.8,997.2 1422.9,990.6" fill="#ffff00"/><polygon points="1388.3,942.8 1401.2,953.3 1401.2,942.6 1388.3,932.2" fill="#ffff00"/><polygon points="1550.0,1005.1 1568.2,998.9 1571.3,990.9 1552.4,997.5" fill="#00ffff"/><polygon points="1497.6,800.2 1495.1,800.3 1497.5,805.8 1497.5,805.8" fill="#00ffff"/><polygon points="1495.1,800.3 1492.7,800.7 1497.5,805.8 1497.5,805.8" fill="#00ffff"/><polygon points="1500.0,800.3 1497.6,800.2 1497.5,805.8 1497.5,805.8" fill="#00ffff"/><polygon points="1474.6,803.6 1473.3,806.0 1485.4,805.4 1486.0,804.2" fill="#00ffff"/><polygon points="1582.7,849.7 1585.4,840.9 1576.5,833.3 1574.0,841.2" fill="#00ffff"/><polygon points="1593.1,953.7 1606.2,943.3 1606.2,932.6 1593.1,943.0" fill="#00ffff"/><polygon points="1492.7,800.7 1490.5,801.3 1497.5,805.8 1497.5,805.8" fill="#ffff00"/><polygon points="1502.4,800.7 1500.0,800.3 1497.5,805.8 1497.5,805.8" fill="#00ffff"/><polygon points="1545.3,815.6 1544.9,810.8 1533.5,807.9 1533.8,811.6" fill="#ffff00"/><polygon points="1490.5,801.3 1488.6,802.1 1497.5,805.8 1497.5,805.8" fill="#ffff00"/><polygon points="1504.6,801.3 1502.4,800.7 1497.5,805.8 1497.5,805.8" fill="#ffff00"/><polygon points="1521.7,806.1 1520.5,803.7 1509.0,804.2 1509.7,805.4" fill="#ffff00"/><polygon points="1387.1,888.5 1395.0,899.3 1399.4,888.5 1391.8,878.1" fill="#00ffff"/><polygon points="1461.6,807.8 1461.2,811.4 1473.1,808.5 1473.3,806.0" fill="#00ffff"/><polygon points="1488.6,802.1 1487.1,803.0 1497.5,805.8 1497.5,805.8" fill="#00ffff"/><polygon points="1506.4,802.1 1504.6,801.3 1497.5,805.8 1497.5,805.8" fill="#ffff00"/><polygon points="1418.4,833.0 1420.8,840.9 1430.2,833.2 1428.2,826.2" fill="#00ffff"/><polygon points="1487.1,803.0 1486.0,804.2 1497.5,805.8 1497.5,805.8" fill="#00ffff"/><polygon points="1508.0,803.1 1506.4,802.1 1497.5,805.8 1497.5,805.8" fill="#ffff00"/><polygon points="1599.6,899.8 1607.7,889.0 1603.0,878.6 1595.2,888.9" fill="#ffff00"/><polygon points="1533.8,811.6 1533.5,807.9 1521.7,806.1 1521.9,808.6" fill="#00ffff"/><polygon points="1404.2,973.2 1420.5,981.8 1418.9,972.3 1402.2,963.5" fill="#00ffff"/><polygon points="1574.0,841.2 1576.5,833.3 1566.8,826.5 1564.6,833.5" fill="#ffff00"/><polygon points="1473.3,806.0 1473.1,808.5 1485.2,806.6 1485.4,805.4" fill="#ffff00"/><polygon points="1573.7,982.2 1590.2,973.6 1592.2,963.9 1575.3,972.7" fill="#ffff00"/><polygon points="1486.0,804.2 1485.4,805.4 1497.5,805.8 1497.5,805.8" fill="#ffff00"/><polygon points="1509.0,804.2 1508.0,803.1 1497.5,805.8 1497.5,805.8" fill="#ffff00"/><polygon points="1428.2,826.2 1430.2,833.2 1440.4,826.3 1438.6,820.4" fill="#00ffff"/><polygon points="1485.4,805.4 1485.2,806.6 1497.5,805.8 1497.5,805.8" fill="#ffff00"/><polygon points="1521.9,808.6 1521.7,806.1 1509.7,805.4 1509.8,806.7" fill="#00ffff"/><polygon points="1509.7,805.4 1509.0,804.2 1497.5,805.8 1497.5,805.8" fill="#00ffff"/><polygon points="1466.2,1015.8 1486.6,1017.9 1486.0,1011.6 1464.4,1009.3" fill="#ffff00"/><polygon points="1507.5,1018.0 1528.0,1015.9 1529.7,1009.4 1508.1,1011.6" fill="#00ffff"/><polygon points="1564.6,833.5 1566.8,826.5 1556.4,820.6 1554.5,826.5" fill="#00ffff"/><polygon points="1391.8,878.1 1399.4,888.5 1404.7,877.9 1397.6,868.1" fill="#00ffff"/><polygon points="1388.3,932.2 1401.2,942.6 1402.2,931.6 1389.5,921.3" fill="#ffff00"/><polygon points="1438.6,820.4 1440.4,826.3 1451.1,820.2 1449.6,815.4" fill="#00ffff"/><polygon points="1485.2,806.6 1485.6,807.8 1497.5,805.8 1497.5,805.8" fill="#ffff00"/><polygon points="1509.8,806.7 1509.7,805.4 1497.5,805.8 1497.5,805.8" fill="#00ffff"/><polygon points="1593.1,943.0 1606.2,932.6 1605.1,921.7 1592.2,932.0" fill="#00ffff"/><polygon points="1449.6,815.4 1451.1,820.2 1462.3,815.1 1461.2,811.4" fill="#00ffff"/><polygon points="1473.1,808.5 1473.8,810.9 1485.6,807.8 1485.2,806.6" fill="#ffff00"/><polygon points="1595.2,888.9 1603.0,878.6 1597.2,868.5 1589.9,878.2" fill="#00ffff"/><polygon points="1485.6,807.8 1486.4,809.0 1497.5,805.8 1497.5,805.8" fill="#ffff00"/><polygon points="1509.4,807.9 1509.8,806.7 1497.5,805.8 1497.5,805.8" fill="#00ffff"/><polygon points="1486.6,1017.9 1507.5,1018.0 1508.1,1011.6 1486.0,1011.6" fill="#00ffff"/><polygon points="1461.2,811.4 1462.3,815.1 1473.8,810.9 1473.1,808.5" fill="#ffff00"/><polygon points="1554.5,826.5 1556.4,820.6 1545.3,815.6 1543.8,820.4" fill="#00ffff"/><polygon points="1486.4,809.0 1487.7,810.1 1497.5,805.8 1497.5,805.8" fill="#00ffff"/><polygon points="1508.5,809.0 1509.4,807.9 1497.5,805.8 1497.5,805.8" fill="#00ffff"/><polygon points="1521.2,811.0 1521.9,808.6 1509.8,806.7 1509.4,807.9" fill="#00ffff"/><polygon points="1543.8,820.4 1545.3,815.6 1533.8,811.6 1532.7,815.2" fill="#ffff00"/><polygon points="1532.7,815.2 1533.8,811.6 1521.9,808.6 1521.2,811.0" fill="#ffff00"/><polygon points="1422.9,990.6 1441.8,997.2 1440.0,988.7 1420.5,981.8" fill="#00ffff"/><polygon points="1397.6,868.1 1404.7,877.9 1411.1,867.6 1404.4,858.4" fill="#ffff00"/><polygon points="1487.7,810.1 1489.5,811.0 1497.5,805.8 1497.5,805.8" fill="#00ffff"/><polygon points="1552.4,997.5 1571.3,990.9 1573.7,982.2 1554.1,988.9" fill="#ffff00"/><polygon points="1507.2,810.1 1508.5,809.0 1497.5,805.8 1497.5,805.8" fill="#ffff00"/><polygon points="1444.2,1004.9 1464.4,1009.3 1462.9,1001.8 1441.8,997.2" fill="#ffff00"/><polygon points="1529.7,1009.4 1550.0,1005.1 1552.4,997.5 1531.1,1002.0" fill="#ffff00"/><polygon points="1489.5,811.0 1491.5,811.7 1497.5,805.8 1497.5,805.8" fill="#00ffff"/><polygon points="1505.5,811.0 1507.2,810.1 1497.5,805.8 1497.5,805.8" fill="#ffff00"/><polygon points="1473.8,810.9 1475.5,813.3 1486.4,809.0 1485.6,807.8" fill="#00ffff"/><polygon points="1589.9,878.2 1597.2,868.5 1590.4,858.8 1583.6,867.9" fill="#00ffff"/><polygon points="1491.5,811.7 1493.8,812.2 1497.5,805.8 1497.5,805.8" fill="#ffff00"/><polygon points="1402.2,963.5 1418.9,972.3 1418.1,962.2 1401.2,953.3" fill="#00ffff"/><polygon points="1503.4,811.7 1505.5,811.0 1497.5,805.8 1497.5,805.8" fill="#00ffff"/><polygon points="1493.8,812.2 1496.2,812.4 1497.5,805.8 1497.5,805.8" fill="#ffff00"/><polygon points="1501.1,812.2 1503.4,811.7 1497.5,805.8 1497.5,805.8" fill="#00ffff"/><polygon points="1575.3,972.7 1592.2,963.9 1593.1,953.7 1576.2,962.5" fill="#ffff00"/><polygon points="1496.2,812.4 1498.7,812.4 1497.5,805.8 1497.5,805.8" fill="#ffff00"/><polygon points="1498.7,812.4 1501.1,812.2 1497.5,805.8 1497.5,805.8" fill="#ffff00"/><polygon points="1389.5,921.3 1402.2,931.6 1404.2,920.4 1391.7,910.3" fill="#ffff00"/><polygon points="1519.4,813.4 1521.2,811.0 1509.4,807.9 1508.5,809.0" fill="#ffff00"/><polygon points="1404.4,858.4 1411.1,867.6 1418.3,857.7 1412.2,849.4" fill="#00ffff"/><polygon points="1592.2,932.0 1605.1,921.7 1602.9,910.7 1590.2,920.8" fill="#ffff00"/><polygon points="1462.3,815.1 1464.8,818.5 1475.5,813.3 1473.8,810.9" fill="#ffff00"/><polygon points="1583.6,867.9 1590.4,858.8 1582.7,849.7 1576.4,858.1" fill="#ffff00"/><polygon points="1475.5,813.3 1478.1,815.4 1487.7,810.1 1486.4,809.0" fill="#ffff00"/><polygon points="1412.2,849.4 1418.3,857.7 1426.3,848.4 1420.8,840.9" fill="#ffff00"/><polygon points="1530.1,818.7 1532.7,815.2 1521.2,811.0 1519.4,813.4" fill="#ffff00"/><polygon points="1516.8,815.5 1519.4,813.4 1508.5,809.0 1507.2,810.1" fill="#00ffff"/><polygon points="1451.1,820.2 1454.4,824.8 1464.8,818.5 1462.3,815.1" fill="#ffff00"/><polygon points="1420.8,840.9 1426.3,848.4 1435.1,839.8 1430.2,833.2" fill="#00ffff"/><polygon points="1576.4,858.1 1582.7,849.7 1574.0,841.2 1568.4,848.7" fill="#ffff00"/><polygon points="1440.4,826.3 1444.5,831.9 1454.4,824.8 1451.1,820.2" fill="#00ffff"/><polygon points="1430.2,833.2 1435.1,839.8 1444.5,831.9 1440.4,826.3" fill="#ffff00"/><polygon points="1540.4,824.9 1543.8,820.4 1532.7,815.2 1530.1,818.7" fill="#00ffff"/><polygon points="1464.4,1009.3 1486.0,1011.6 1485.5,1004.2 1462.9,1001.8" fill="#00ffff"/><polygon points="1508.1,1011.6 1529.7,1009.4 1531.1,1002.0 1508.5,1004.2" fill="#ffff00"/><polygon points="1391.7,910.3 1404.2,920.4 1407.1,909.1 1395.0,899.3" fill="#00ffff"/><polygon points="1478.1,815.4 1481.5,817.2 1489.5,811.0 1487.7,810.1" fill="#00ffff"/><polygon points="1568.4,848.7 1574.0,841.2 1564.6,833.5 1559.7,840.1" fill="#ffff00"/><polygon points="1550.3,832.1 1554.5,826.5 1543.8,820.4 1540.4,824.9" fill="#00ffff"/><polygon points="1513.4,817.2 1516.8,815.5 1507.2,810.1 1505.5,811.0" fill="#ffff00"/><polygon points="1559.7,840.1 1564.6,833.5 1554.5,826.5 1550.3,832.1" fill="#ffff00"/><polygon points="1590.2,920.8 1602.9,910.7 1599.6,899.8 1587.3,909.5" fill="#00ffff"/><polygon points="1420.5,981.8 1440.0,988.7 1438.8,979.3 1418.9,972.3" fill="#ffff00"/><polygon points="1401.2,953.3 1418.1,962.2 1418.1,951.5 1401.2,942.6" fill="#00ffff"/><polygon points="1554.1,988.9 1573.7,982.2 1575.3,972.7 1555.3,979.6" fill="#00ffff"/><polygon points="1464.8,818.5 1468.6,821.7 1478.1,815.4 1475.5,813.3" fill="#ffff00"/><polygon points="1486.0,1011.6 1508.1,1011.6 1508.5,1004.2 1485.5,1004.2" fill="#00ffff"/><polygon points="1576.2,962.5 1593.1,953.7 1593.1,943.0 1576.2,951.9" fill="#ffff00"/><polygon points="1481.5,817.2 1485.5,818.6 1491.5,811.7 1489.5,811.0" fill="#ffff00"/><polygon points="1526.2,821.8 1530.1,818.7 1519.4,813.4 1516.8,815.5" fill="#ffff00"/><polygon points="1509.3,818.6 1513.4,817.2 1505.5,811.0 1503.4,811.7" fill="#00ffff"/><polygon points="1441.8,997.2 1462.9,1001.8 1461.8,993.4 1440.0,988.7" fill="#00ffff"/><polygon points="1531.1,1002.0 1552.4,997.5 1554.1,988.9 1532.2,993.6" fill="#ffff00"/><polygon points="1395.0,899.3 1407.1,909.1 1411.0,897.9 1399.4,888.5" fill="#00ffff"/><polygon points="1485.5,818.6 1490.1,819.6 1493.8,812.2 1491.5,811.7" fill="#00ffff"/><polygon points="1504.7,819.6 1509.3,818.6 1503.4,811.7 1501.1,812.2" fill="#ffff00"/><polygon points="1587.3,909.5 1599.6,899.8 1595.2,888.9 1583.5,898.2" fill="#ffff00"/><polygon points="1490.1,819.6 1494.9,820.1 1496.2,812.4 1493.8,812.2" fill="#ffff00"/><polygon points="1454.4,824.8 1459.5,828.9 1468.6,821.7 1464.8,818.5" fill="#ffff00"/><polygon points="1499.9,820.1 1504.7,819.6 1501.1,812.2 1498.7,812.4" fill="#00ffff"/><polygon points="1494.9,820.1 1499.9,820.1 1498.7,812.4 1496.2,812.4" fill="#ffff00"/><polygon points="1468.6,821.7 1473.7,824.4 1481.5,817.2 1478.1,815.4" fill="#00ffff"/><polygon points="1535.3,829.0 1540.4,824.9 1530.1,818.7 1526.2,821.8" fill="#00ffff"/><polygon points="1521.1,824.5 1526.2,821.8 1516.8,815.5 1513.4,817.2" fill="#ffff00"/><polygon points="1399.4,888.5 1411.0,897.9 1415.7,886.7 1404.7,877.9" fill="#00ffff"/><polygon points="1401.2,942.6 1418.1,951.5 1418.9,940.5 1402.2,931.6" fill="#00ffff"/><polygon points="1576.2,951.9 1593.1,943.0 1592.2,932.0 1575.3,940.8" fill="#00ffff"/><polygon points="1444.5,831.9 1450.7,836.9 1459.5,828.9 1454.4,824.8" fill="#ffff00"/><polygon points="1583.5,898.2 1595.2,888.9 1589.9,878.2 1578.8,887.1" fill="#00ffff"/><polygon points="1418.9,972.3 1438.8,979.3 1438.2,969.3 1418.1,962.2" fill="#00ffff"/><polygon points="1544.0,837.1 1550.3,832.1 1540.4,824.9 1535.3,829.0" fill="#ffff00"/><polygon points="1555.3,979.6 1575.3,972.7 1576.2,962.5 1555.9,969.5" fill="#00ffff"/><polygon points="1404.7,877.9 1415.7,886.7 1421.3,875.8 1411.1,867.6" fill="#00ffff"/><polygon points="1462.9,1001.8 1485.5,1004.2 1485.1,995.9 1461.8,993.4" fill="#00ffff"/><polygon points="1508.5,1004.2 1531.1,1002.0 1532.2,993.6 1508.9,995.9" fill="#ffff00"/><polygon points="1473.7,824.4 1479.7,826.5 1485.5,818.6 1481.5,817.2" fill="#00ffff"/><polygon points="1435.1,839.8 1442.4,845.8 1450.7,836.9 1444.5,831.9" fill="#00ffff"/><polygon points="1515.0,826.5 1521.1,824.5 1513.4,817.2 1509.3,818.6" fill="#ffff00"/><polygon points="1578.8,887.1 1589.9,878.2 1583.6,867.9 1573.2,876.2" fill="#ffff00"/><polygon points="1411.1,867.6 1421.3,875.8 1427.6,865.3 1418.3,857.7" fill="#ffff00"/><polygon points="1426.3,848.4 1434.7,855.3 1442.4,845.8 1435.1,839.8" fill="#00ffff"/><polygon points="1552.2,846.0 1559.7,840.1 1550.3,832.1 1544.0,837.1" fill="#00ffff"/><polygon points="1459.5,828.9 1466.1,832.4 1473.7,824.4 1468.6,821.7" fill="#00ffff"/><polygon points="1418.3,857.7 1427.6,865.3 1434.7,855.3 1426.3,848.4" fill="#ffff00"/><polygon points="1485.5,1004.2 1508.5,1004.2 1508.9,995.9 1485.1,995.9" fill="#ffff00"/><polygon points="1440.0,988.7 1461.8,993.4 1461.1,984.2 1438.8,979.3" fill="#00ffff"/><polygon points="1532.2,993.6 1554.1,988.9 1555.3,979.6 1533.0,984.3" fill="#ffff00"/><polygon points="1573.2,876.2 1583.6,867.9 1576.4,858.1 1566.9,865.6" fill="#00ffff"/><polygon points="1402.2,931.6 1418.9,940.5 1420.5,929.1 1404.2,920.4" fill="#00ffff"/><polygon points="1528.6,832.5 1535.3,829.0 1526.2,821.8 1521.1,824.5" fill="#ffff00"/><polygon points="1559.9,855.5 1568.4,848.7 1559.7,840.1 1552.2,846.0" fill="#ffff00"/><polygon points="1479.7,826.5 1486.5,827.9 1490.1,819.6 1485.5,818.6" fill="#00ffff"/><polygon points="1566.9,865.6 1576.4,858.1 1568.4,848.7 1559.9,855.5" fill="#ffff00"/><polygon points="1508.2,828.0 1515.0,826.5 1509.3,818.6 1504.7,819.6" fill="#ffff00"/><polygon points="1575.3,940.8 1592.2,932.0 1590.2,920.8 1573.7,929.4" fill="#00ffff"/><polygon points="1486.5,827.9 1493.7,828.7 1494.9,820.1 1490.1,819.6" fill="#00ffff"/><polygon points="1501.0,828.7 1508.2,828.0 1504.7,819.6 1499.9,820.1" fill="#ffff00"/><polygon points="1493.7,828.7 1501.0,828.7 1499.9,820.1 1494.9,820.1" fill="#ffff00"/><polygon points="1418.1,962.2 1438.2,969.3 1438.2,958.6 1418.1,951.5" fill="#ffff00"/><polygon points="1450.7,836.9 1458.9,841.3 1466.1,832.4 1459.5,828.9" fill="#00ffff"/><polygon points="1555.9,969.5 1576.2,962.5 1576.2,951.9 1555.9,958.8" fill="#ffff00"/><polygon points="1466.1,832.4 1474.1,835.2 1479.7,826.5 1473.7,824.4" fill="#ffff00"/><polygon points="1404.2,920.4 1420.5,929.1 1422.9,917.5 1407.1,909.1" fill="#00ffff"/><polygon points="1535.7,841.5 1544.0,837.1 1535.3,829.0 1528.6,832.5" fill="#ffff00"/><polygon points="1520.6,835.3 1528.6,832.5 1521.1,824.5 1515.0,826.5" fill="#00ffff"/><polygon points="1573.7,929.4 1590.2,920.8 1587.3,909.5 1571.3,917.8" fill="#00ffff"/><polygon points="1461.8,993.4 1485.1,995.9 1484.8,986.6 1461.1,984.2" fill="#ffff00"/><polygon points="1508.9,995.9 1532.2,993.6 1533.0,984.3 1509.1,986.7" fill="#00ffff"/><polygon points="1442.4,845.8 1452.1,850.9 1458.9,841.3 1450.7,836.9" fill="#00ffff"/><polygon points="1438.8,979.3 1461.1,984.2 1460.7,974.1 1438.2,969.3" fill="#ffff00"/><polygon points="1533.0,984.3 1555.3,979.6 1555.9,969.5 1533.3,974.3" fill="#00ffff"/><polygon points="1407.1,909.1 1422.9,917.5 1426.1,905.9 1411.0,897.9" fill="#00ffff"/><polygon points="1474.1,835.2 1483.0,837.1 1486.5,827.9 1479.7,826.5" fill="#ffff00"/><polygon points="1542.5,851.1 1552.2,846.0 1544.0,837.1 1535.7,841.5" fill="#ffff00"/><polygon points="1485.1,995.9 1508.9,995.9 1509.1,986.7 1484.8,986.6" fill="#ffff00"/><polygon points="1511.7,837.2 1520.6,835.3 1515.0,826.5 1508.2,828.0" fill="#ffff00"/><polygon points="1571.3,917.8 1587.3,909.5 1583.5,898.2 1568.2,906.2" fill="#00ffff"/><polygon points="1418.1,951.5 1438.2,958.6 1438.8,947.4 1418.9,940.5" fill="#00ffff"/><polygon points="1434.7,855.3 1445.7,861.1 1452.1,850.9 1442.4,845.8" fill="#00ffff"/><polygon points="1555.9,958.8 1576.2,951.9 1575.3,940.8 1555.3,947.7" fill="#00ffff"/><polygon points="1458.9,841.3 1468.7,844.7 1474.1,835.2 1466.1,832.4" fill="#00ffff"/><polygon points="1411.0,897.9 1426.1,905.9 1430.0,894.3 1415.7,886.7" fill="#00ffff"/><polygon points="1483.0,837.1 1492.5,838.1 1493.7,828.7 1486.5,827.9" fill="#00ffff"/><polygon points="1548.8,861.3 1559.9,855.5 1552.2,846.0 1542.5,851.1" fill="#ffff00"/><polygon points="1502.1,838.1 1511.7,837.2 1508.2,828.0 1501.0,828.7" fill="#ffff00"/><polygon points="1525.9,844.8 1535.7,841.5 1528.6,832.5 1520.6,835.3" fill="#ffff00"/><polygon points="1568.2,906.2 1583.5,898.2 1578.8,887.1 1564.3,894.6" fill="#00ffff"/><polygon points="1427.6,865.3 1439.9,871.8 1445.7,861.1 1434.7,855.3" fill="#00ffff"/><polygon points="1492.5,838.1 1502.1,838.1 1501.0,828.7 1493.7,828.7" fill="#00ffff"/><polygon points="1415.7,886.7 1430.0,894.3 1434.6,882.9 1421.3,875.8" fill="#00ffff"/><polygon points="1421.3,875.8 1434.6,882.9 1439.9,871.8 1427.6,865.3" fill="#00ffff"/><polygon points="1554.6,872.0 1566.9,865.6 1559.9,855.5 1548.8,861.3" fill="#00ffff"/><polygon points="1564.3,894.6 1578.8,887.1 1573.2,876.2 1559.8,883.2" fill="#00ffff"/><polygon points="1559.8,883.2 1573.2,876.2 1566.9,865.6 1554.6,872.0" fill="#00ffff"/><polygon points="1461.1,984.2 1484.8,986.6 1484.7,976.7 1460.7,974.1" fill="#ffff00"/><polygon points="1509.1,986.7 1533.0,984.3 1533.3,974.3 1509.3,976.7" fill="#ffff00"/><polygon points="1438.2,969.3 1460.7,974.1 1460.7,963.5 1438.2,958.6" fill="#ffff00"/><polygon points="1418.9,940.5 1438.8,947.4 1440.0,935.9 1420.5,929.1" fill="#ffff00"/><polygon points="1533.3,974.3 1555.9,969.5 1555.9,958.8 1533.3,963.6" fill="#00ffff"/><polygon points="1452.1,850.9 1463.6,854.9 1468.7,844.7 1458.9,841.3" fill="#ffff00"/><polygon points="1468.7,844.7 1479.6,847.1 1483.0,837.1 1474.1,835.2" fill="#ffff00"/><polygon points="1555.3,947.7 1575.3,940.8 1573.7,929.4 1554.1,936.2" fill="#ffff00"/><polygon points="1514.9,847.2 1525.9,844.8 1520.6,835.3 1511.7,837.2" fill="#ffff00"/><polygon points="1530.9,855.1 1542.5,851.1 1535.7,841.5 1525.9,844.8" fill="#ffff00"/><polygon points="1484.8,986.6 1509.1,986.7 1509.3,976.7 1484.7,976.7" fill="#ffff00"/><polygon points="1479.6,847.1 1491.3,848.3 1492.5,838.1 1483.0,837.1" fill="#ffff00"/><polygon points="1420.5,929.1 1440.0,935.9 1441.8,924.1 1422.9,917.5" fill="#00ffff"/><polygon points="1503.2,848.3 1514.9,847.2 1511.7,837.2 1502.1,838.1" fill="#00ffff"/><polygon points="1445.7,861.1 1458.8,865.7 1463.6,854.9 1452.1,850.9" fill="#00ffff"/><polygon points="1554.1,936.2 1573.7,929.4 1571.3,917.8 1552.4,924.4" fill="#ffff00"/><polygon points="1491.3,848.3 1503.2,848.3 1502.1,838.1 1492.5,838.1" fill="#00ffff"/><polygon points="1535.6,865.8 1548.8,861.3 1542.5,851.1 1530.9,855.1" fill="#00ffff"/><polygon points="1438.2,958.6 1460.7,963.5 1461.1,952.3 1438.8,947.4" fill="#00ffff"/><polygon points="1533.3,963.6 1555.9,958.8 1555.3,947.7 1533.0,952.4" fill="#00ffff"/><polygon points="1463.6,854.9 1476.4,857.7 1479.6,847.1 1468.7,844.7" fill="#00ffff"/><polygon points="1460.7,974.1 1484.7,976.7 1484.7,966.0 1460.7,963.5" fill="#00ffff"/><polygon points="1422.9,917.5 1441.8,924.1 1444.2,912.2 1426.1,905.9" fill="#ffff00"/><polygon points="1509.3,976.7 1533.3,974.3 1533.3,963.6 1509.3,966.1" fill="#00ffff"/><polygon points="1518.0,857.8 1530.9,855.1 1525.9,844.8 1514.9,847.2" fill="#00ffff"/><polygon points="1439.9,871.8 1454.4,876.9 1458.8,865.7 1445.7,861.1" fill="#ffff00"/><polygon points="1552.4,924.4 1571.3,917.8 1568.2,906.2 1550.0,912.5" fill="#00ffff"/><polygon points="1539.9,877.1 1554.6,872.0 1548.8,861.3 1535.6,865.8" fill="#ffff00"/><polygon points="1426.1,905.9 1444.2,912.2 1447.1,900.3 1430.0,894.3" fill="#00ffff"/><polygon points="1434.6,882.9 1450.5,888.5 1454.4,876.9 1439.9,871.8" fill="#00ffff"/><polygon points="1484.7,976.7 1509.3,976.7 1509.3,966.1 1484.7,966.0" fill="#ffff00"/><polygon points="1430.0,894.3 1447.1,900.3 1450.5,888.5 1434.6,882.9" fill="#ffff00"/><polygon points="1550.0,912.5 1568.2,906.2 1564.3,894.6 1547.2,900.5" fill="#ffff00"/><polygon points="1543.8,888.7 1559.8,883.2 1554.6,872.0 1539.9,877.1" fill="#00ffff"/><polygon points="1547.2,900.5 1564.3,894.6 1559.8,883.2 1543.8,888.7" fill="#00ffff"/><polygon points="1476.4,857.7 1490.2,859.1 1491.3,848.3 1479.6,847.1" fill="#ffff00"/><polygon points="1504.2,859.2 1518.0,857.8 1514.9,847.2 1503.2,848.3" fill="#ffff00"/><polygon points="1438.8,947.4 1461.1,952.3 1461.8,940.7 1440.0,935.9" fill="#00ffff"/><polygon points="1458.8,865.7 1473.5,868.9 1476.4,857.7 1463.6,854.9" fill="#00ffff"/><polygon points="1533.0,952.4 1555.3,947.7 1554.1,936.2 1532.2,940.8" fill="#00ffff"/><polygon points="1490.2,859.1 1504.2,859.2 1503.2,848.3 1491.3,848.3" fill="#00ffff"/><polygon points="1520.9,869.0 1535.6,865.8 1530.9,855.1 1518.0,857.8" fill="#00ffff"/><polygon points="1460.7,963.5 1484.7,966.0 1484.8,954.8 1461.1,952.3" fill="#00ffff"/><polygon points="1509.3,966.1 1533.3,963.6 1533.0,952.4 1509.1,954.8" fill="#00ffff"/><polygon points="1440.0,935.9 1461.8,940.7 1462.9,928.7 1441.8,924.1" fill="#ffff00"/><polygon points="1454.4,876.9 1470.8,880.5 1473.5,868.9 1458.8,865.7" fill="#ffff00"/><polygon points="1532.2,940.8 1554.1,936.2 1552.4,924.4 1531.1,928.9" fill="#ffff00"/><polygon points="1484.7,966.0 1509.3,966.1 1509.1,954.8 1484.8,954.8" fill="#00ffff"/><polygon points="1523.5,880.6 1539.9,877.1 1535.6,865.8 1520.9,869.0" fill="#00ffff"/><polygon points="1473.5,868.9 1489.2,870.5 1490.2,859.1 1476.4,857.7" fill="#00ffff"/><polygon points="1505.2,870.5 1520.9,869.0 1518.0,857.8 1504.2,859.2" fill="#00ffff"/><polygon points="1441.8,924.1 1462.9,928.7 1464.4,916.6 1444.2,912.2" fill="#ffff00"/><polygon points="1489.2,870.5 1505.2,870.5 1504.2,859.2 1490.2,859.1" fill="#00ffff"/><polygon points="1450.5,888.5 1468.4,892.4 1470.8,880.5 1454.4,876.9" fill="#ffff00"/><polygon points="1461.1,952.3 1484.8,954.8 1485.1,943.1 1461.8,940.7" fill="#ffff00"/><polygon points="1531.1,928.9 1552.4,924.4 1550.0,912.5 1529.7,916.8" fill="#ffff00"/><polygon points="1509.1,954.8 1533.0,952.4 1532.2,940.8 1508.9,943.2" fill="#ffff00"/><polygon points="1525.9,892.5 1543.8,888.7 1539.9,877.1 1523.5,880.6" fill="#00ffff"/><polygon points="1444.2,912.2 1464.4,916.6 1466.2,904.5 1447.1,900.3" fill="#00ffff"/><polygon points="1447.1,900.3 1466.2,904.5 1468.4,892.4 1450.5,888.5" fill="#00ffff"/><polygon points="1529.7,916.8 1550.0,912.5 1547.2,900.5 1528.0,904.6" fill="#ffff00"/><polygon points="1528.0,904.6 1547.2,900.5 1543.8,888.7 1525.9,892.5" fill="#ffff00"/><polygon points="1470.8,880.5 1488.2,882.3 1489.2,870.5 1473.5,868.9" fill="#00ffff"/><polygon points="1484.8,954.8 1509.1,954.8 1508.9,943.2 1485.1,943.1" fill="#00ffff"/><polygon points="1506.0,882.3 1523.5,880.6 1520.9,869.0 1505.2,870.5" fill="#00ffff"/><polygon points="1461.8,940.7 1485.1,943.1 1485.5,931.1 1462.9,928.7" fill="#ffff00"/><polygon points="1508.9,943.2 1532.2,940.8 1531.1,928.9 1508.5,931.2" fill="#00ffff"/><polygon points="1488.2,882.3 1506.0,882.3 1505.2,870.5 1489.2,870.5" fill="#ffff00"/><polygon points="1468.4,892.4 1487.4,894.4 1488.2,882.3 1470.8,880.5" fill="#ffff00"/><polygon points="1506.8,894.4 1525.9,892.5 1523.5,880.6 1506.0,882.3" fill="#ffff00"/><polygon points="1462.9,928.7 1485.5,931.1 1486.0,918.9 1464.4,916.6" fill="#00ffff"/><polygon points="1485.1,943.1 1508.9,943.2 1508.5,931.2 1485.5,931.1" fill="#00ffff"/><polygon points="1508.5,931.2 1531.1,928.9 1529.7,916.8 1508.1,918.9" fill="#ffff00"/><polygon points="1466.2,904.5 1486.6,906.6 1487.4,894.4 1468.4,892.4" fill="#ffff00"/><polygon points="1487.4,894.4 1506.8,894.4 1506.0,882.3 1488.2,882.3" fill="#ffff00"/><polygon points="1507.5,906.7 1528.0,904.6 1525.9,892.5 1506.8,894.4" fill="#00ffff"/><polygon points="1464.4,916.6 1486.0,918.9 1486.6,906.6 1466.2,904.5" fill="#00ffff"/><polygon points="1508.1,918.9 1529.7,916.8 1528.0,904.6 1507.5,906.7" fill="#ffff00"/><polygon points="1485.5,931.1 1508.5,931.2 1508.1,918.9 1486.0,918.9" fill="#00ffff"/><polygon points="1486.6,906.6 1507.5,906.7 1506.8,894.4 1487.4,894.4" fill="#ffff00"/><polygon points="1486.0,918.9 1508.1,918.9 1507.5,906.7 1486.6,906.6" fill="#ffff00"/></g></svg><div class="t" style="left:1314px;top:787px;font-size:12px;color:#222">1</div><div class="t" style="left:1300px;top:839px;font-size:12px;color:#222">0.5</div><div class="t" style="left:1312px;top:891px;font-size:12px;color:#222">0</div><div class="t" style="left:1293px;top:943px;font-size:12px;color:#222">−0.5</div><div class="t" style="left:1303px;top:996px;font-size:12px;color:#222">−1</div><div class="t" style="left:1312px;top:1010px;font-size:12px;color:#222">1</div><div class="t" style="left:1340px;top:1035px;font-size:12px;color:#222">0.5</div><div class="t" style="left:1386px;top:1058px;font-size:12px;color:#222">0</div><div class="t" style="left:1672px;top:1034px;font-size:12px;color:#222">1</div><div class="t" style="left:1627px;top:1052px;font-size:12px;color:#222">0.5</div><div class="t" style="left:1577px;top:1070px;font-size:12px;color:#222">0</div></body></html>
